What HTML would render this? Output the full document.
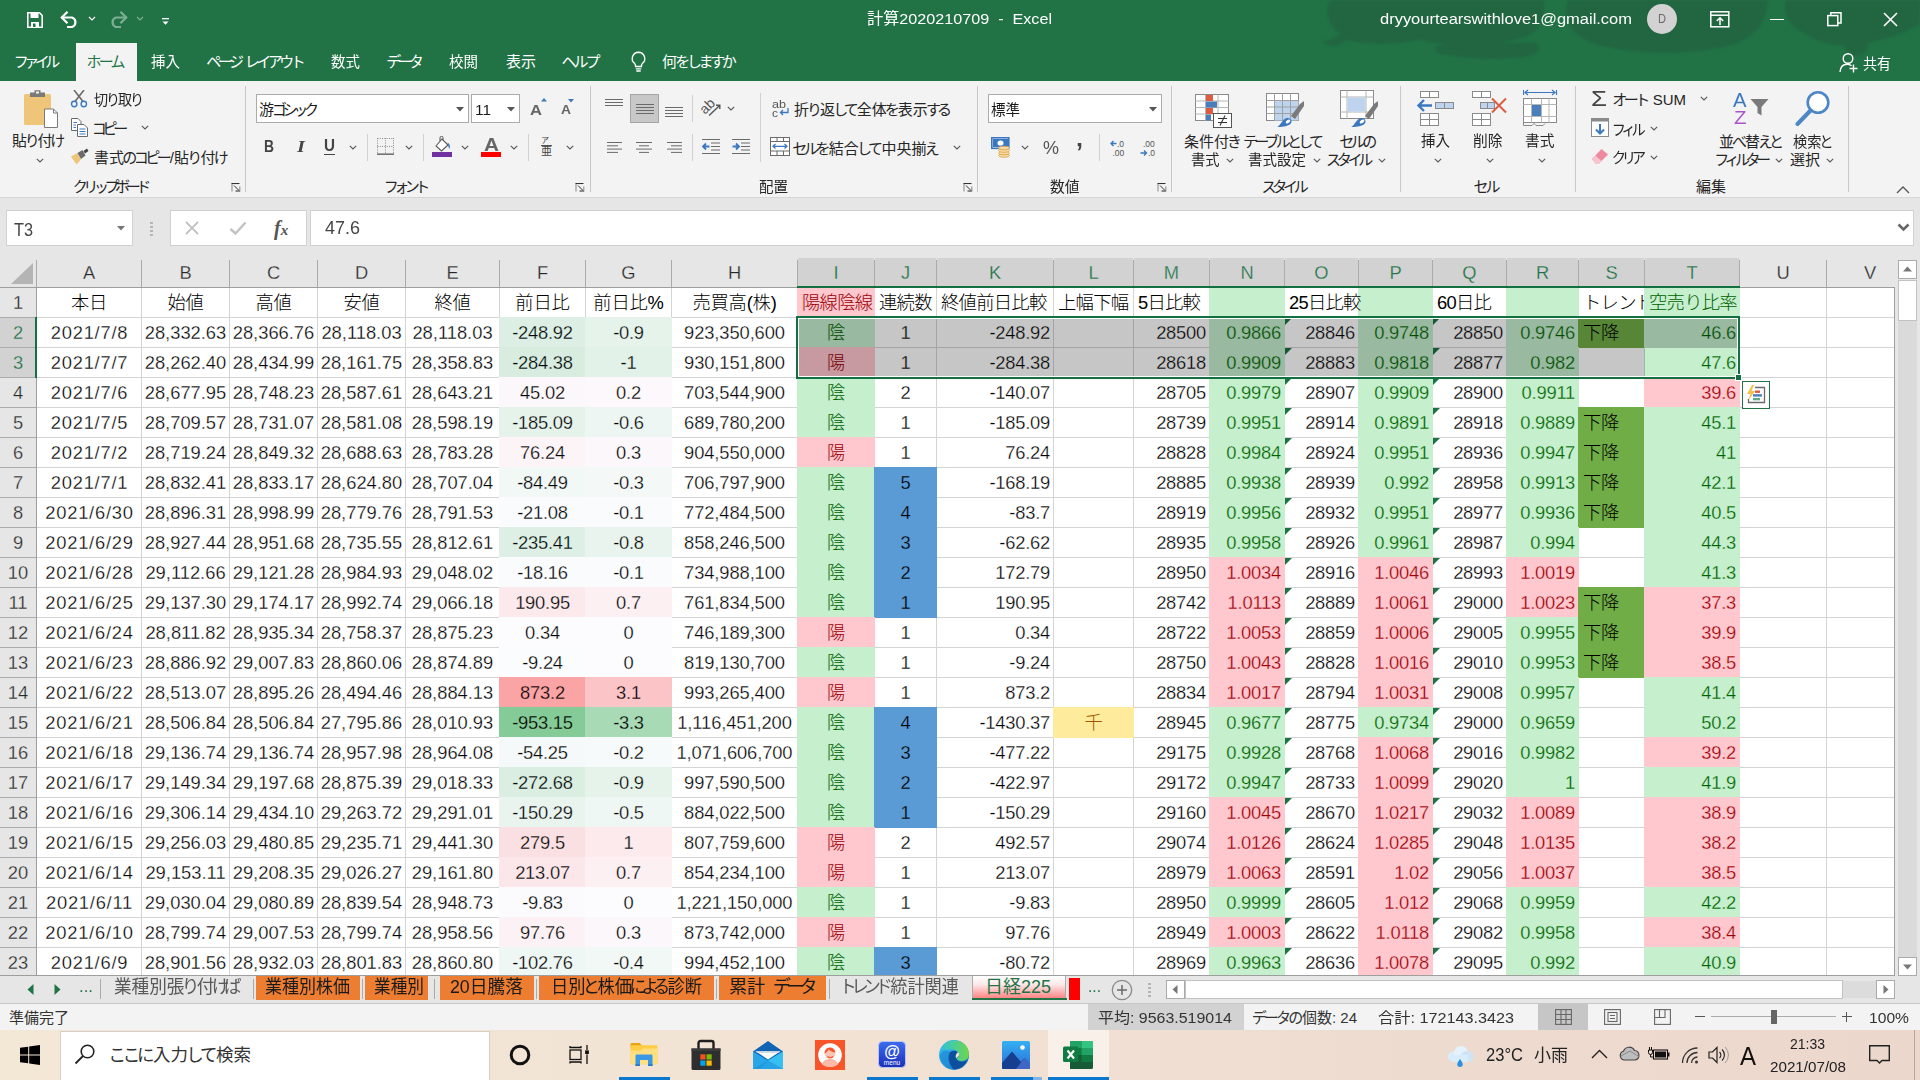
<!DOCTYPE html>
<html lang="ja"><head><meta charset="utf-8"><title>計算2020210709 - Excel</title>
<style>
*{box-sizing:border-box;margin:0;padding:0}
html,body{width:1920px;height:1080px;overflow:hidden;background:#fff}
body{position:relative;font-family:"Liberation Sans","Noto Sans CJK JP",sans-serif;color:#000}
div,span,svg{position:absolute}
.t{white-space:nowrap;transform-origin:0 50%;line-height:1}
.t span{position:static}
#grid{left:0;top:0;width:1895px;height:976px;overflow:hidden;background:#fff}
.ch{-webkit-text-stroke:.28px #e6e6e6;top:258px;height:29px;line-height:30px;text-align:center;font-size:18.33px;color:#262626;background:#e6e6e6}
.ch.sel{background:#d2d2d2;color:#217346;-webkit-text-stroke:.28px #d2d2d2}
.rh{-webkit-text-stroke:.28px #e6e6e6;left:0;width:36px;height:29px;line-height:29px;text-align:center;font-size:18.33px;color:#262626;background:#e6e6e6}
.rh.sel{background:#d2d2d2;color:#217346;-webkit-text-stroke:.28px #d2d2d2}
.c{height:29px;line-height:29px;font-size:18.33px;font-weight:300;white-space:nowrap;overflow:hidden;letter-spacing:-0.22px}
.c.c{text-align:center}
.c.r{text-align:right;padding-right:3px}
.c.l{text-align:left;padding-left:4px}
.c.lo{text-align:left;padding-left:4px;overflow:visible}
.c.d{letter-spacing:.75px;padding-left:1px}
.c.k{letter-spacing:-.75px}
.c.n{letter-spacing:0}
.c.h{letter-spacing:-.1px}
.vl{top:288px;width:1px;height:690px;background:#d4d4d4}
.hl{left:37px;width:1858px;height:1px;background:#d4d4d4}
.tri{width:0;height:0;border-top:7px solid #1e7145;border-right:7px solid transparent}
</style></head>
<body>
<div id="grid">
<div style="left:0px;top:258px;width:1895px;height:30px;background:#e6e6e6;"></div>
<div style="left:0px;top:288px;width:37px;height:688px;background:#e6e6e6;"></div>
<div class="vl" style="left:141px"></div>
<div class="vl" style="left:229px"></div>
<div class="vl" style="left:317px"></div>
<div class="vl" style="left:405px"></div>
<div class="vl" style="left:499px"></div>
<div class="vl" style="left:585px"></div>
<div class="vl" style="left:671px"></div>
<div class="vl" style="left:797px"></div>
<div class="vl" style="left:874px"></div>
<div class="vl" style="left:936px"></div>
<div class="vl" style="left:1053px"></div>
<div class="vl" style="left:1133px"></div>
<div class="vl" style="left:1209px"></div>
<div class="vl" style="left:1284px"></div>
<div class="vl" style="left:1358px"></div>
<div class="vl" style="left:1432px"></div>
<div class="vl" style="left:1506px"></div>
<div class="vl" style="left:1578px"></div>
<div class="vl" style="left:1644px"></div>
<div class="vl" style="left:1739px"></div>
<div class="vl" style="left:1826px"></div>
<div class="hl" style="top:317px"></div>
<div class="hl" style="top:347px"></div>
<div class="hl" style="top:377px"></div>
<div class="hl" style="top:407px"></div>
<div class="hl" style="top:437px"></div>
<div class="hl" style="top:467px"></div>
<div class="hl" style="top:497px"></div>
<div class="hl" style="top:527px"></div>
<div class="hl" style="top:557px"></div>
<div class="hl" style="top:587px"></div>
<div class="hl" style="top:617px"></div>
<div class="hl" style="top:647px"></div>
<div class="hl" style="top:677px"></div>
<div class="hl" style="top:707px"></div>
<div class="hl" style="top:737px"></div>
<div class="hl" style="top:767px"></div>
<div class="hl" style="top:797px"></div>
<div class="hl" style="top:827px"></div>
<div class="hl" style="top:857px"></div>
<div class="hl" style="top:887px"></div>
<div class="hl" style="top:917px"></div>
<div class="hl" style="top:947px"></div>
<div class="hl" style="top:977px"></div>
<div class="ch" style="left:37px;width:104px">A</div>
<div class="ch" style="left:142px;width:87px">B</div>
<div class="ch" style="left:230px;width:87px">C</div>
<div class="ch" style="left:318px;width:87px">D</div>
<div class="ch" style="left:406px;width:93px">E</div>
<div class="ch" style="left:500px;width:85px">F</div>
<div class="ch" style="left:586px;width:85px">G</div>
<div class="ch" style="left:672px;width:125px">H</div>
<div class="ch sel" style="left:798px;width:76px">I</div>
<div class="ch sel" style="left:875px;width:61px">J</div>
<div class="ch sel" style="left:937px;width:116px">K</div>
<div class="ch sel" style="left:1054px;width:79px">L</div>
<div class="ch sel" style="left:1134px;width:75px">M</div>
<div class="ch sel" style="left:1210px;width:74px">N</div>
<div class="ch sel" style="left:1285px;width:73px">O</div>
<div class="ch sel" style="left:1359px;width:73px">P</div>
<div class="ch sel" style="left:1433px;width:73px">Q</div>
<div class="ch sel" style="left:1507px;width:71px">R</div>
<div class="ch sel" style="left:1579px;width:65px">S</div>
<div class="ch sel" style="left:1645px;width:94px">T</div>
<div class="ch" style="left:1740px;width:86px">U</div>
<div class="ch" style="left:1827px;width:86px">V</div>
<div class="rh" style="top:288px">1</div>
<div class="rh sel" style="top:318px">2</div>
<div class="rh sel" style="top:348px">3</div>
<div class="rh" style="top:378px">4</div>
<div class="rh" style="top:408px">5</div>
<div class="rh" style="top:438px">6</div>
<div class="rh" style="top:468px">7</div>
<div class="rh" style="top:498px">8</div>
<div class="rh" style="top:528px">9</div>
<div class="rh" style="top:558px">10</div>
<div class="rh" style="top:588px">11</div>
<div class="rh" style="top:618px">12</div>
<div class="rh" style="top:648px">13</div>
<div class="rh" style="top:678px">14</div>
<div class="rh" style="top:708px">15</div>
<div class="rh" style="top:738px">16</div>
<div class="rh" style="top:768px">17</div>
<div class="rh" style="top:798px">18</div>
<div class="rh" style="top:828px">19</div>
<div class="rh" style="top:858px">20</div>
<div class="rh" style="top:888px">21</div>
<div class="rh" style="top:918px">22</div>
<div class="rh" style="top:948px">23</div>








<div class="f" style="left:797px;top:287px;width:78px;height:31px;background:#ffc7ce"></div>




<div class="f" style="left:1209px;top:287px;width:76px;height:31px;background:#c6efce"></div>

<div class="f" style="left:1358px;top:287px;width:75px;height:31px;background:#c6efce"></div>

<div class="f" style="left:1506px;top:287px;width:73px;height:31px;background:#c6efce"></div>

<div class="f" style="left:1644px;top:287px;width:96px;height:31px;background:#c6efce"></div>





<div class="f" style="left:499px;top:317px;width:87px;height:31px;background:#ddefe4"></div>
<div class="f" style="left:585px;top:317px;width:87px;height:31px;background:#e5f3eb"></div>

<div class="f" style="left:797px;top:317px;width:78px;height:31px;background:#c6efce"></div>




<div class="f" style="left:1209px;top:317px;width:76px;height:31px;background:#c6efce"></div>

<div class="tri" style="left:1285px;top:318px"></div>
<div class="f" style="left:1358px;top:317px;width:75px;height:31px;background:#c6efce"></div>

<div class="tri" style="left:1433px;top:318px"></div>
<div class="f" style="left:1506px;top:317px;width:73px;height:31px;background:#c6efce"></div>
<div class="f" style="left:1578px;top:317px;width:67px;height:31px;background:#70ad47"></div>
<div class="f" style="left:1644px;top:317px;width:96px;height:31px;background:#c6efce"></div>





<div class="f" style="left:499px;top:347px;width:87px;height:31px;background:#d8ede0"></div>
<div class="f" style="left:585px;top:347px;width:87px;height:31px;background:#e2f2e9"></div>

<div class="f" style="left:797px;top:347px;width:78px;height:31px;background:#ffc7ce"></div>




<div class="f" style="left:1209px;top:347px;width:76px;height:31px;background:#c6efce"></div>

<div class="tri" style="left:1285px;top:348px"></div>
<div class="f" style="left:1358px;top:347px;width:75px;height:31px;background:#c6efce"></div>

<div class="tri" style="left:1433px;top:348px"></div>
<div class="f" style="left:1506px;top:347px;width:73px;height:31px;background:#c6efce"></div>

<div class="f" style="left:1644px;top:347px;width:96px;height:31px;background:#c6efce"></div>





<div class="f" style="left:499px;top:377px;width:87px;height:31px;background:#fcf7fa"></div>
<div class="f" style="left:585px;top:377px;width:87px;height:31px;background:#fcf8fb"></div>

<div class="f" style="left:797px;top:377px;width:78px;height:31px;background:#c6efce"></div>




<div class="f" style="left:1209px;top:377px;width:76px;height:31px;background:#c6efce"></div>

<div class="tri" style="left:1285px;top:378px"></div>
<div class="f" style="left:1358px;top:377px;width:75px;height:31px;background:#c6efce"></div>

<div class="tri" style="left:1433px;top:378px"></div>
<div class="f" style="left:1506px;top:377px;width:73px;height:31px;background:#c6efce"></div>

<div class="f" style="left:1644px;top:377px;width:96px;height:31px;background:#ffc7ce"></div>





<div class="f" style="left:499px;top:407px;width:87px;height:31px;background:#e5f3eb"></div>
<div class="f" style="left:585px;top:407px;width:87px;height:31px;background:#edf6f2"></div>

<div class="f" style="left:797px;top:407px;width:78px;height:31px;background:#c6efce"></div>




<div class="f" style="left:1209px;top:407px;width:76px;height:31px;background:#c6efce"></div>

<div class="tri" style="left:1285px;top:408px"></div>
<div class="f" style="left:1358px;top:407px;width:75px;height:31px;background:#c6efce"></div>

<div class="tri" style="left:1433px;top:408px"></div>
<div class="f" style="left:1506px;top:407px;width:73px;height:31px;background:#c6efce"></div>
<div class="f" style="left:1578px;top:407px;width:67px;height:31px;background:#70ad47"></div>
<div class="f" style="left:1644px;top:407px;width:96px;height:31px;background:#c6efce"></div>





<div class="f" style="left:499px;top:437px;width:87px;height:31px;background:#fcf4f7"></div>
<div class="f" style="left:585px;top:437px;width:87px;height:31px;background:#fcf7fa"></div>

<div class="f" style="left:797px;top:437px;width:78px;height:31px;background:#ffc7ce"></div>




<div class="f" style="left:1209px;top:437px;width:76px;height:31px;background:#c6efce"></div>

<div class="tri" style="left:1285px;top:438px"></div>
<div class="f" style="left:1358px;top:437px;width:75px;height:31px;background:#c6efce"></div>

<div class="tri" style="left:1433px;top:438px"></div>
<div class="f" style="left:1506px;top:437px;width:73px;height:31px;background:#c6efce"></div>
<div class="f" style="left:1578px;top:437px;width:67px;height:31px;background:#70ad47"></div>
<div class="f" style="left:1644px;top:437px;width:96px;height:31px;background:#c6efce"></div>





<div class="f" style="left:499px;top:467px;width:87px;height:31px;background:#f1f8f6"></div>
<div class="f" style="left:585px;top:467px;width:87px;height:31px;background:#f4f9f8"></div>

<div class="f" style="left:797px;top:467px;width:78px;height:31px;background:#c6efce"></div>
<div class="f" style="left:874px;top:467px;width:63px;height:31px;background:#5b9bd5"></div>



<div class="f" style="left:1209px;top:467px;width:76px;height:31px;background:#c6efce"></div>

<div class="tri" style="left:1285px;top:468px"></div>
<div class="f" style="left:1358px;top:467px;width:75px;height:31px;background:#c6efce"></div>

<div class="tri" style="left:1433px;top:468px"></div>
<div class="f" style="left:1506px;top:467px;width:73px;height:31px;background:#c6efce"></div>
<div class="f" style="left:1578px;top:467px;width:67px;height:31px;background:#70ad47"></div>
<div class="f" style="left:1644px;top:467px;width:96px;height:31px;background:#c6efce"></div>





<div class="f" style="left:499px;top:497px;width:87px;height:31px;background:#f9fbfd"></div>
<div class="f" style="left:585px;top:497px;width:87px;height:31px;background:#f9fbfd"></div>

<div class="f" style="left:797px;top:497px;width:78px;height:31px;background:#c6efce"></div>
<div class="f" style="left:874px;top:497px;width:63px;height:31px;background:#5b9bd5"></div>



<div class="f" style="left:1209px;top:497px;width:76px;height:31px;background:#c6efce"></div>

<div class="tri" style="left:1285px;top:498px"></div>
<div class="f" style="left:1358px;top:497px;width:75px;height:31px;background:#c6efce"></div>

<div class="tri" style="left:1433px;top:498px"></div>
<div class="f" style="left:1506px;top:497px;width:73px;height:31px;background:#c6efce"></div>
<div class="f" style="left:1578px;top:497px;width:67px;height:31px;background:#70ad47"></div>
<div class="f" style="left:1644px;top:497px;width:96px;height:31px;background:#c6efce"></div>





<div class="f" style="left:499px;top:527px;width:87px;height:31px;background:#def0e5"></div>
<div class="f" style="left:585px;top:527px;width:87px;height:31px;background:#e8f4ed"></div>

<div class="f" style="left:797px;top:527px;width:78px;height:31px;background:#c6efce"></div>
<div class="f" style="left:874px;top:527px;width:63px;height:31px;background:#5b9bd5"></div>



<div class="f" style="left:1209px;top:527px;width:76px;height:31px;background:#c6efce"></div>

<div class="tri" style="left:1285px;top:528px"></div>
<div class="f" style="left:1358px;top:527px;width:75px;height:31px;background:#c6efce"></div>

<div class="tri" style="left:1433px;top:528px"></div>
<div class="f" style="left:1506px;top:527px;width:73px;height:31px;background:#c6efce"></div>

<div class="f" style="left:1644px;top:527px;width:96px;height:31px;background:#c6efce"></div>





<div class="f" style="left:499px;top:557px;width:87px;height:31px;background:#fafbfd"></div>
<div class="f" style="left:585px;top:557px;width:87px;height:31px;background:#f9fbfd"></div>

<div class="f" style="left:797px;top:557px;width:78px;height:31px;background:#c6efce"></div>
<div class="f" style="left:874px;top:557px;width:63px;height:31px;background:#5b9bd5"></div>



<div class="f" style="left:1209px;top:557px;width:76px;height:31px;background:#ffc7ce"></div>

<div class="tri" style="left:1285px;top:558px"></div>
<div class="f" style="left:1358px;top:557px;width:75px;height:31px;background:#ffc7ce"></div>

<div class="tri" style="left:1433px;top:558px"></div>
<div class="f" style="left:1506px;top:557px;width:73px;height:31px;background:#ffc7ce"></div>

<div class="f" style="left:1644px;top:557px;width:96px;height:31px;background:#c6efce"></div>





<div class="f" style="left:499px;top:587px;width:87px;height:31px;background:#fbe9ec"></div>
<div class="f" style="left:585px;top:587px;width:87px;height:31px;background:#fcf0f3"></div>

<div class="f" style="left:797px;top:587px;width:78px;height:31px;background:#c6efce"></div>
<div class="f" style="left:874px;top:587px;width:63px;height:31px;background:#5b9bd5"></div>



<div class="f" style="left:1209px;top:587px;width:76px;height:31px;background:#ffc7ce"></div>

<div class="tri" style="left:1285px;top:588px"></div>
<div class="f" style="left:1358px;top:587px;width:75px;height:31px;background:#ffc7ce"></div>

<div class="tri" style="left:1433px;top:588px"></div>
<div class="f" style="left:1506px;top:587px;width:73px;height:31px;background:#ffc7ce"></div>
<div class="f" style="left:1578px;top:587px;width:67px;height:31px;background:#70ad47"></div>
<div class="f" style="left:1644px;top:587px;width:96px;height:31px;background:#ffc7ce"></div>





<div class="f" style="left:499px;top:617px;width:87px;height:31px;background:#fcfcff"></div>
<div class="f" style="left:585px;top:617px;width:87px;height:31px;background:#fcfcff"></div>

<div class="f" style="left:797px;top:617px;width:78px;height:31px;background:#ffc7ce"></div>




<div class="f" style="left:1209px;top:617px;width:76px;height:31px;background:#ffc7ce"></div>

<div class="tri" style="left:1285px;top:618px"></div>
<div class="f" style="left:1358px;top:617px;width:75px;height:31px;background:#ffc7ce"></div>

<div class="tri" style="left:1433px;top:618px"></div>
<div class="f" style="left:1506px;top:617px;width:73px;height:31px;background:#c6efce"></div>
<div class="f" style="left:1578px;top:617px;width:67px;height:31px;background:#70ad47"></div>
<div class="f" style="left:1644px;top:617px;width:96px;height:31px;background:#ffc7ce"></div>





<div class="f" style="left:499px;top:647px;width:87px;height:31px;background:#fbfcfe"></div>
<div class="f" style="left:585px;top:647px;width:87px;height:31px;background:#fcfcff"></div>

<div class="f" style="left:797px;top:647px;width:78px;height:31px;background:#c6efce"></div>




<div class="f" style="left:1209px;top:647px;width:76px;height:31px;background:#ffc7ce"></div>

<div class="tri" style="left:1285px;top:648px"></div>
<div class="f" style="left:1358px;top:647px;width:75px;height:31px;background:#ffc7ce"></div>

<div class="tri" style="left:1433px;top:648px"></div>
<div class="f" style="left:1506px;top:647px;width:73px;height:31px;background:#c6efce"></div>
<div class="f" style="left:1578px;top:647px;width:67px;height:31px;background:#70ad47"></div>
<div class="f" style="left:1644px;top:647px;width:96px;height:31px;background:#ffc7ce"></div>





<div class="f" style="left:499px;top:677px;width:87px;height:31px;background:#faa4a6"></div>
<div class="f" style="left:585px;top:677px;width:87px;height:31px;background:#fbc5c8"></div>

<div class="f" style="left:797px;top:677px;width:78px;height:31px;background:#ffc7ce"></div>




<div class="f" style="left:1209px;top:677px;width:76px;height:31px;background:#ffc7ce"></div>

<div class="tri" style="left:1285px;top:678px"></div>
<div class="f" style="left:1358px;top:677px;width:75px;height:31px;background:#ffc7ce"></div>

<div class="tri" style="left:1433px;top:678px"></div>
<div class="f" style="left:1506px;top:677px;width:73px;height:31px;background:#c6efce"></div>

<div class="f" style="left:1644px;top:677px;width:96px;height:31px;background:#c6efce"></div>





<div class="f" style="left:499px;top:707px;width:87px;height:31px;background:#84cb97"></div>
<div class="f" style="left:585px;top:707px;width:87px;height:31px;background:#a8dab6"></div>

<div class="f" style="left:797px;top:707px;width:78px;height:31px;background:#c6efce"></div>
<div class="f" style="left:874px;top:707px;width:63px;height:31px;background:#5b9bd5"></div>

<div class="f" style="left:1053px;top:707px;width:81px;height:31px;background:#ffeb9c"></div>

<div class="f" style="left:1209px;top:707px;width:76px;height:31px;background:#c6efce"></div>

<div class="tri" style="left:1285px;top:708px"></div>
<div class="f" style="left:1358px;top:707px;width:75px;height:31px;background:#c6efce"></div>

<div class="tri" style="left:1433px;top:708px"></div>
<div class="f" style="left:1506px;top:707px;width:73px;height:31px;background:#c6efce"></div>

<div class="f" style="left:1644px;top:707px;width:96px;height:31px;background:#c6efce"></div>





<div class="f" style="left:499px;top:737px;width:87px;height:31px;background:#f5f9f9"></div>
<div class="f" style="left:585px;top:737px;width:87px;height:31px;background:#f7fafb"></div>

<div class="f" style="left:797px;top:737px;width:78px;height:31px;background:#c6efce"></div>
<div class="f" style="left:874px;top:737px;width:63px;height:31px;background:#5b9bd5"></div>



<div class="f" style="left:1209px;top:737px;width:76px;height:31px;background:#c6efce"></div>

<div class="tri" style="left:1285px;top:738px"></div>
<div class="f" style="left:1358px;top:737px;width:75px;height:31px;background:#ffc7ce"></div>

<div class="tri" style="left:1433px;top:738px"></div>
<div class="f" style="left:1506px;top:737px;width:73px;height:31px;background:#c6efce"></div>

<div class="f" style="left:1644px;top:737px;width:96px;height:31px;background:#ffc7ce"></div>





<div class="f" style="left:499px;top:767px;width:87px;height:31px;background:#daeee1"></div>
<div class="f" style="left:585px;top:767px;width:87px;height:31px;background:#e5f3eb"></div>

<div class="f" style="left:797px;top:767px;width:78px;height:31px;background:#c6efce"></div>
<div class="f" style="left:874px;top:767px;width:63px;height:31px;background:#5b9bd5"></div>



<div class="f" style="left:1209px;top:767px;width:76px;height:31px;background:#c6efce"></div>

<div class="tri" style="left:1285px;top:768px"></div>
<div class="f" style="left:1358px;top:767px;width:75px;height:31px;background:#ffc7ce"></div>

<div class="tri" style="left:1433px;top:768px"></div>
<div class="f" style="left:1506px;top:767px;width:73px;height:31px;background:#c6efce"></div>

<div class="f" style="left:1644px;top:767px;width:96px;height:31px;background:#c6efce"></div>





<div class="f" style="left:499px;top:797px;width:87px;height:31px;background:#e9f4ef"></div>
<div class="f" style="left:585px;top:797px;width:87px;height:31px;background:#eff7f4"></div>

<div class="f" style="left:797px;top:797px;width:78px;height:31px;background:#c6efce"></div>
<div class="f" style="left:874px;top:797px;width:63px;height:31px;background:#5b9bd5"></div>



<div class="f" style="left:1209px;top:797px;width:76px;height:31px;background:#ffc7ce"></div>

<div class="tri" style="left:1285px;top:798px"></div>
<div class="f" style="left:1358px;top:797px;width:75px;height:31px;background:#ffc7ce"></div>

<div class="tri" style="left:1433px;top:798px"></div>
<div class="f" style="left:1506px;top:797px;width:73px;height:31px;background:#ffc7ce"></div>

<div class="f" style="left:1644px;top:797px;width:96px;height:31px;background:#ffc7ce"></div>





<div class="f" style="left:499px;top:827px;width:87px;height:31px;background:#fbe0e3"></div>
<div class="f" style="left:585px;top:827px;width:87px;height:31px;background:#fceaed"></div>

<div class="f" style="left:797px;top:827px;width:78px;height:31px;background:#ffc7ce"></div>




<div class="f" style="left:1209px;top:827px;width:76px;height:31px;background:#ffc7ce"></div>

<div class="tri" style="left:1285px;top:828px"></div>
<div class="f" style="left:1358px;top:827px;width:75px;height:31px;background:#ffc7ce"></div>

<div class="tri" style="left:1433px;top:828px"></div>
<div class="f" style="left:1506px;top:827px;width:73px;height:31px;background:#ffc7ce"></div>

<div class="f" style="left:1644px;top:827px;width:96px;height:31px;background:#ffc7ce"></div>





<div class="f" style="left:499px;top:857px;width:87px;height:31px;background:#fbe6e9"></div>
<div class="f" style="left:585px;top:857px;width:87px;height:31px;background:#fcf0f3"></div>

<div class="f" style="left:797px;top:857px;width:78px;height:31px;background:#ffc7ce"></div>




<div class="f" style="left:1209px;top:857px;width:76px;height:31px;background:#ffc7ce"></div>

<div class="tri" style="left:1285px;top:858px"></div>
<div class="f" style="left:1358px;top:857px;width:75px;height:31px;background:#ffc7ce"></div>

<div class="tri" style="left:1433px;top:858px"></div>
<div class="f" style="left:1506px;top:857px;width:73px;height:31px;background:#ffc7ce"></div>

<div class="f" style="left:1644px;top:857px;width:96px;height:31px;background:#ffc7ce"></div>





<div class="f" style="left:499px;top:887px;width:87px;height:31px;background:#fbfbfe"></div>
<div class="f" style="left:585px;top:887px;width:87px;height:31px;background:#fcfcff"></div>

<div class="f" style="left:797px;top:887px;width:78px;height:31px;background:#c6efce"></div>




<div class="f" style="left:1209px;top:887px;width:76px;height:31px;background:#c6efce"></div>

<div class="tri" style="left:1285px;top:888px"></div>
<div class="f" style="left:1358px;top:887px;width:75px;height:31px;background:#ffc7ce"></div>

<div class="tri" style="left:1433px;top:888px"></div>
<div class="f" style="left:1506px;top:887px;width:73px;height:31px;background:#c6efce"></div>

<div class="f" style="left:1644px;top:887px;width:96px;height:31px;background:#c6efce"></div>





<div class="f" style="left:499px;top:917px;width:87px;height:31px;background:#fcf2f5"></div>
<div class="f" style="left:585px;top:917px;width:87px;height:31px;background:#fcf7fa"></div>

<div class="f" style="left:797px;top:917px;width:78px;height:31px;background:#ffc7ce"></div>




<div class="f" style="left:1209px;top:917px;width:76px;height:31px;background:#ffc7ce"></div>

<div class="tri" style="left:1285px;top:918px"></div>
<div class="f" style="left:1358px;top:917px;width:75px;height:31px;background:#ffc7ce"></div>

<div class="tri" style="left:1433px;top:918px"></div>
<div class="f" style="left:1506px;top:917px;width:73px;height:31px;background:#c6efce"></div>

<div class="f" style="left:1644px;top:917px;width:96px;height:31px;background:#ffc7ce"></div>





<div class="f" style="left:499px;top:947px;width:87px;height:31px;background:#eff7f4"></div>
<div class="f" style="left:585px;top:947px;width:87px;height:31px;background:#f2f8f6"></div>

<div class="f" style="left:797px;top:947px;width:78px;height:31px;background:#c6efce"></div>
<div class="f" style="left:874px;top:947px;width:63px;height:31px;background:#5b9bd5"></div>



<div class="f" style="left:1209px;top:947px;width:76px;height:31px;background:#c6efce"></div>

<div class="tri" style="left:1285px;top:948px"></div>
<div class="f" style="left:1358px;top:947px;width:75px;height:31px;background:#ffc7ce"></div>

<div class="tri" style="left:1433px;top:948px"></div>
<div class="f" style="left:1506px;top:947px;width:73px;height:31px;background:#c6efce"></div>

<div class="f" style="left:1644px;top:947px;width:96px;height:31px;background:#c6efce"></div>
<div class="c c" style="left:37px;top:288px;width:104px;">本日</div>
<div class="c c" style="left:142px;top:288px;width:87px;">始値</div>
<div class="c c" style="left:230px;top:288px;width:87px;">高値</div>
<div class="c c" style="left:318px;top:288px;width:87px;">安値</div>
<div class="c c" style="left:406px;top:288px;width:93px;">終値</div>
<div class="c c" style="left:500px;top:288px;width:85px;">前日比</div>
<div class="c c" style="left:586px;top:288px;width:85px;">前日比%</div>
<div class="c c" style="left:672px;top:288px;width:125px;">売買高(株)</div>
<div class="c l k" style="left:798px;top:288px;width:76px;color:#9c0006;">陽線陰線</div>
<div class="c l k" style="left:875px;top:288px;width:61px;">連続数</div>
<div class="c l k" style="left:937px;top:288px;width:116px;">終値前日比較</div>
<div class="c l k" style="left:1054px;top:288px;width:79px;">上幅下幅</div>
<div class="c l k" style="left:1134px;top:288px;width:75px;">5日比較</div>
<div class="c lo k" style="left:1285px;top:288px;width:73px;">25日比較</div>
<div class="c l k" style="left:1433px;top:288px;width:73px;">60日比</div>
<div class="c l k" style="left:1579px;top:288px;width:65px;">トレンド</div>
<div class="c l k" style="left:1645px;top:288px;width:94px;color:#006100;">空売り比率</div>
<div class="c c d" style="left:37px;top:318px;width:104px;-webkit-text-stroke:.28px #fff;">2021/7/8</div>
<div class="c c n" style="left:142px;top:318px;width:87px;-webkit-text-stroke:.28px #fff;">28,332.63</div>
<div class="c c n" style="left:230px;top:318px;width:87px;-webkit-text-stroke:.28px #fff;">28,366.76</div>
<div class="c c n" style="left:318px;top:318px;width:87px;-webkit-text-stroke:.28px #fff;">28,118.03</div>
<div class="c c n" style="left:406px;top:318px;width:93px;-webkit-text-stroke:.28px #fff;">28,118.03</div>
<div class="c c" style="left:500px;top:318px;width:85px;-webkit-text-stroke:.28px #ddefe4;">-248.92</div>
<div class="c c" style="left:586px;top:318px;width:85px;-webkit-text-stroke:.28px #e5f3eb;">-0.9</div>
<div class="c c h" style="left:672px;top:318px;width:125px;-webkit-text-stroke:.28px #fff;">923,350,600</div>
<div class="c c" style="left:798px;top:318px;width:76px;color:#006100;">陰</div>
<div class="c c" style="left:875px;top:318px;width:61px;-webkit-text-stroke:.28px #fff;">1</div>
<div class="c r" style="left:937px;top:318px;width:116px;-webkit-text-stroke:.28px #fff;">-248.92</div>
<div class="c r" style="left:1134px;top:318px;width:75px;-webkit-text-stroke:.28px #fff;">28500</div>
<div class="c r" style="left:1210px;top:318px;width:74px;color:#006100;-webkit-text-stroke:.28px #c6efce;">0.9866</div>
<div class="c r" style="left:1285px;top:318px;width:73px;-webkit-text-stroke:.28px #fff;">28846</div>
<div class="c r" style="left:1359px;top:318px;width:73px;color:#006100;-webkit-text-stroke:.28px #c6efce;">0.9748</div>
<div class="c r" style="left:1433px;top:318px;width:73px;-webkit-text-stroke:.28px #fff;">28850</div>
<div class="c r" style="left:1507px;top:318px;width:71px;color:#006100;-webkit-text-stroke:.28px #c6efce;">0.9746</div>
<div class="c l" style="left:1579px;top:318px;width:65px;">下降</div>
<div class="c r" style="left:1645px;top:318px;width:94px;color:#006100;-webkit-text-stroke:.28px #c6efce;">46.6</div>
<div class="c c d" style="left:37px;top:348px;width:104px;-webkit-text-stroke:.28px #fff;">2021/7/7</div>
<div class="c c n" style="left:142px;top:348px;width:87px;-webkit-text-stroke:.28px #fff;">28,262.40</div>
<div class="c c n" style="left:230px;top:348px;width:87px;-webkit-text-stroke:.28px #fff;">28,434.99</div>
<div class="c c n" style="left:318px;top:348px;width:87px;-webkit-text-stroke:.28px #fff;">28,161.75</div>
<div class="c c n" style="left:406px;top:348px;width:93px;-webkit-text-stroke:.28px #fff;">28,358.83</div>
<div class="c c" style="left:500px;top:348px;width:85px;-webkit-text-stroke:.28px #d8ede0;">-284.38</div>
<div class="c c" style="left:586px;top:348px;width:85px;-webkit-text-stroke:.28px #e2f2e9;">-1</div>
<div class="c c h" style="left:672px;top:348px;width:125px;-webkit-text-stroke:.28px #fff;">930,151,800</div>
<div class="c c" style="left:798px;top:348px;width:76px;color:#9c0006;">陽</div>
<div class="c c" style="left:875px;top:348px;width:61px;-webkit-text-stroke:.28px #fff;">1</div>
<div class="c r" style="left:937px;top:348px;width:116px;-webkit-text-stroke:.28px #fff;">-284.38</div>
<div class="c r" style="left:1134px;top:348px;width:75px;-webkit-text-stroke:.28px #fff;">28618</div>
<div class="c r" style="left:1210px;top:348px;width:74px;color:#006100;-webkit-text-stroke:.28px #c6efce;">0.9909</div>
<div class="c r" style="left:1285px;top:348px;width:73px;-webkit-text-stroke:.28px #fff;">28883</div>
<div class="c r" style="left:1359px;top:348px;width:73px;color:#006100;-webkit-text-stroke:.28px #c6efce;">0.9818</div>
<div class="c r" style="left:1433px;top:348px;width:73px;-webkit-text-stroke:.28px #fff;">28877</div>
<div class="c r" style="left:1507px;top:348px;width:71px;color:#006100;-webkit-text-stroke:.28px #c6efce;">0.982</div>
<div class="c r" style="left:1645px;top:348px;width:94px;color:#006100;-webkit-text-stroke:.28px #c6efce;">47.6</div>
<div class="c c d" style="left:37px;top:378px;width:104px;-webkit-text-stroke:.28px #fff;">2021/7/6</div>
<div class="c c n" style="left:142px;top:378px;width:87px;-webkit-text-stroke:.28px #fff;">28,677.95</div>
<div class="c c n" style="left:230px;top:378px;width:87px;-webkit-text-stroke:.28px #fff;">28,748.23</div>
<div class="c c n" style="left:318px;top:378px;width:87px;-webkit-text-stroke:.28px #fff;">28,587.61</div>
<div class="c c n" style="left:406px;top:378px;width:93px;-webkit-text-stroke:.28px #fff;">28,643.21</div>
<div class="c c" style="left:500px;top:378px;width:85px;-webkit-text-stroke:.28px #fcf7fa;">45.02</div>
<div class="c c" style="left:586px;top:378px;width:85px;-webkit-text-stroke:.28px #fcf8fb;">0.2</div>
<div class="c c h" style="left:672px;top:378px;width:125px;-webkit-text-stroke:.28px #fff;">703,544,900</div>
<div class="c c" style="left:798px;top:378px;width:76px;color:#006100;">陰</div>
<div class="c c" style="left:875px;top:378px;width:61px;-webkit-text-stroke:.28px #fff;">2</div>
<div class="c r" style="left:937px;top:378px;width:116px;-webkit-text-stroke:.28px #fff;">-140.07</div>
<div class="c r" style="left:1134px;top:378px;width:75px;-webkit-text-stroke:.28px #fff;">28705</div>
<div class="c r" style="left:1210px;top:378px;width:74px;color:#006100;-webkit-text-stroke:.28px #c6efce;">0.9979</div>
<div class="c r" style="left:1285px;top:378px;width:73px;-webkit-text-stroke:.28px #fff;">28907</div>
<div class="c r" style="left:1359px;top:378px;width:73px;color:#006100;-webkit-text-stroke:.28px #c6efce;">0.9909</div>
<div class="c r" style="left:1433px;top:378px;width:73px;-webkit-text-stroke:.28px #fff;">28900</div>
<div class="c r" style="left:1507px;top:378px;width:71px;color:#006100;-webkit-text-stroke:.28px #c6efce;">0.9911</div>
<div class="c r" style="left:1645px;top:378px;width:94px;color:#9c0006;-webkit-text-stroke:.28px #ffc7ce;">39.6</div>
<div class="c c d" style="left:37px;top:408px;width:104px;-webkit-text-stroke:.28px #fff;">2021/7/5</div>
<div class="c c n" style="left:142px;top:408px;width:87px;-webkit-text-stroke:.28px #fff;">28,709.57</div>
<div class="c c n" style="left:230px;top:408px;width:87px;-webkit-text-stroke:.28px #fff;">28,731.07</div>
<div class="c c n" style="left:318px;top:408px;width:87px;-webkit-text-stroke:.28px #fff;">28,581.08</div>
<div class="c c n" style="left:406px;top:408px;width:93px;-webkit-text-stroke:.28px #fff;">28,598.19</div>
<div class="c c" style="left:500px;top:408px;width:85px;-webkit-text-stroke:.28px #e5f3eb;">-185.09</div>
<div class="c c" style="left:586px;top:408px;width:85px;-webkit-text-stroke:.28px #edf6f2;">-0.6</div>
<div class="c c h" style="left:672px;top:408px;width:125px;-webkit-text-stroke:.28px #fff;">689,780,200</div>
<div class="c c" style="left:798px;top:408px;width:76px;color:#006100;">陰</div>
<div class="c c" style="left:875px;top:408px;width:61px;-webkit-text-stroke:.28px #fff;">1</div>
<div class="c r" style="left:937px;top:408px;width:116px;-webkit-text-stroke:.28px #fff;">-185.09</div>
<div class="c r" style="left:1134px;top:408px;width:75px;-webkit-text-stroke:.28px #fff;">28739</div>
<div class="c r" style="left:1210px;top:408px;width:74px;color:#006100;-webkit-text-stroke:.28px #c6efce;">0.9951</div>
<div class="c r" style="left:1285px;top:408px;width:73px;-webkit-text-stroke:.28px #fff;">28914</div>
<div class="c r" style="left:1359px;top:408px;width:73px;color:#006100;-webkit-text-stroke:.28px #c6efce;">0.9891</div>
<div class="c r" style="left:1433px;top:408px;width:73px;-webkit-text-stroke:.28px #fff;">28918</div>
<div class="c r" style="left:1507px;top:408px;width:71px;color:#006100;-webkit-text-stroke:.28px #c6efce;">0.9889</div>
<div class="c l" style="left:1579px;top:408px;width:65px;">下降</div>
<div class="c r" style="left:1645px;top:408px;width:94px;color:#006100;-webkit-text-stroke:.28px #c6efce;">45.1</div>
<div class="c c d" style="left:37px;top:438px;width:104px;-webkit-text-stroke:.28px #fff;">2021/7/2</div>
<div class="c c n" style="left:142px;top:438px;width:87px;-webkit-text-stroke:.28px #fff;">28,719.24</div>
<div class="c c n" style="left:230px;top:438px;width:87px;-webkit-text-stroke:.28px #fff;">28,849.32</div>
<div class="c c n" style="left:318px;top:438px;width:87px;-webkit-text-stroke:.28px #fff;">28,688.63</div>
<div class="c c n" style="left:406px;top:438px;width:93px;-webkit-text-stroke:.28px #fff;">28,783.28</div>
<div class="c c" style="left:500px;top:438px;width:85px;-webkit-text-stroke:.28px #fcf4f7;">76.24</div>
<div class="c c" style="left:586px;top:438px;width:85px;-webkit-text-stroke:.28px #fcf7fa;">0.3</div>
<div class="c c h" style="left:672px;top:438px;width:125px;-webkit-text-stroke:.28px #fff;">904,550,000</div>
<div class="c c" style="left:798px;top:438px;width:76px;color:#9c0006;">陽</div>
<div class="c c" style="left:875px;top:438px;width:61px;-webkit-text-stroke:.28px #fff;">1</div>
<div class="c r" style="left:937px;top:438px;width:116px;-webkit-text-stroke:.28px #fff;">76.24</div>
<div class="c r" style="left:1134px;top:438px;width:75px;-webkit-text-stroke:.28px #fff;">28828</div>
<div class="c r" style="left:1210px;top:438px;width:74px;color:#006100;-webkit-text-stroke:.28px #c6efce;">0.9984</div>
<div class="c r" style="left:1285px;top:438px;width:73px;-webkit-text-stroke:.28px #fff;">28924</div>
<div class="c r" style="left:1359px;top:438px;width:73px;color:#006100;-webkit-text-stroke:.28px #c6efce;">0.9951</div>
<div class="c r" style="left:1433px;top:438px;width:73px;-webkit-text-stroke:.28px #fff;">28936</div>
<div class="c r" style="left:1507px;top:438px;width:71px;color:#006100;-webkit-text-stroke:.28px #c6efce;">0.9947</div>
<div class="c l" style="left:1579px;top:438px;width:65px;">下降</div>
<div class="c r" style="left:1645px;top:438px;width:94px;color:#006100;-webkit-text-stroke:.28px #c6efce;">41</div>
<div class="c c d" style="left:37px;top:468px;width:104px;-webkit-text-stroke:.28px #fff;">2021/7/1</div>
<div class="c c n" style="left:142px;top:468px;width:87px;-webkit-text-stroke:.28px #fff;">28,832.41</div>
<div class="c c n" style="left:230px;top:468px;width:87px;-webkit-text-stroke:.28px #fff;">28,833.17</div>
<div class="c c n" style="left:318px;top:468px;width:87px;-webkit-text-stroke:.28px #fff;">28,624.80</div>
<div class="c c n" style="left:406px;top:468px;width:93px;-webkit-text-stroke:.28px #fff;">28,707.04</div>
<div class="c c" style="left:500px;top:468px;width:85px;-webkit-text-stroke:.28px #f1f8f6;">-84.49</div>
<div class="c c" style="left:586px;top:468px;width:85px;-webkit-text-stroke:.28px #f4f9f8;">-0.3</div>
<div class="c c h" style="left:672px;top:468px;width:125px;-webkit-text-stroke:.28px #fff;">706,797,900</div>
<div class="c c" style="left:798px;top:468px;width:76px;color:#006100;">陰</div>
<div class="c c" style="left:875px;top:468px;width:61px;-webkit-text-stroke:.28px #5b9bd5;">5</div>
<div class="c r" style="left:937px;top:468px;width:116px;-webkit-text-stroke:.28px #fff;">-168.19</div>
<div class="c r" style="left:1134px;top:468px;width:75px;-webkit-text-stroke:.28px #fff;">28885</div>
<div class="c r" style="left:1210px;top:468px;width:74px;color:#006100;-webkit-text-stroke:.28px #c6efce;">0.9938</div>
<div class="c r" style="left:1285px;top:468px;width:73px;-webkit-text-stroke:.28px #fff;">28939</div>
<div class="c r" style="left:1359px;top:468px;width:73px;color:#006100;-webkit-text-stroke:.28px #c6efce;">0.992</div>
<div class="c r" style="left:1433px;top:468px;width:73px;-webkit-text-stroke:.28px #fff;">28958</div>
<div class="c r" style="left:1507px;top:468px;width:71px;color:#006100;-webkit-text-stroke:.28px #c6efce;">0.9913</div>
<div class="c l" style="left:1579px;top:468px;width:65px;">下降</div>
<div class="c r" style="left:1645px;top:468px;width:94px;color:#006100;-webkit-text-stroke:.28px #c6efce;">42.1</div>
<div class="c c d" style="left:37px;top:498px;width:104px;-webkit-text-stroke:.28px #fff;">2021/6/30</div>
<div class="c c n" style="left:142px;top:498px;width:87px;-webkit-text-stroke:.28px #fff;">28,896.31</div>
<div class="c c n" style="left:230px;top:498px;width:87px;-webkit-text-stroke:.28px #fff;">28,998.99</div>
<div class="c c n" style="left:318px;top:498px;width:87px;-webkit-text-stroke:.28px #fff;">28,779.76</div>
<div class="c c n" style="left:406px;top:498px;width:93px;-webkit-text-stroke:.28px #fff;">28,791.53</div>
<div class="c c" style="left:500px;top:498px;width:85px;-webkit-text-stroke:.28px #f9fbfd;">-21.08</div>
<div class="c c" style="left:586px;top:498px;width:85px;-webkit-text-stroke:.28px #f9fbfd;">-0.1</div>
<div class="c c h" style="left:672px;top:498px;width:125px;-webkit-text-stroke:.28px #fff;">772,484,500</div>
<div class="c c" style="left:798px;top:498px;width:76px;color:#006100;">陰</div>
<div class="c c" style="left:875px;top:498px;width:61px;-webkit-text-stroke:.28px #5b9bd5;">4</div>
<div class="c r" style="left:937px;top:498px;width:116px;-webkit-text-stroke:.28px #fff;">-83.7</div>
<div class="c r" style="left:1134px;top:498px;width:75px;-webkit-text-stroke:.28px #fff;">28919</div>
<div class="c r" style="left:1210px;top:498px;width:74px;color:#006100;-webkit-text-stroke:.28px #c6efce;">0.9956</div>
<div class="c r" style="left:1285px;top:498px;width:73px;-webkit-text-stroke:.28px #fff;">28932</div>
<div class="c r" style="left:1359px;top:498px;width:73px;color:#006100;-webkit-text-stroke:.28px #c6efce;">0.9951</div>
<div class="c r" style="left:1433px;top:498px;width:73px;-webkit-text-stroke:.28px #fff;">28977</div>
<div class="c r" style="left:1507px;top:498px;width:71px;color:#006100;-webkit-text-stroke:.28px #c6efce;">0.9936</div>
<div class="c l" style="left:1579px;top:498px;width:65px;">下降</div>
<div class="c r" style="left:1645px;top:498px;width:94px;color:#006100;-webkit-text-stroke:.28px #c6efce;">40.5</div>
<div class="c c d" style="left:37px;top:528px;width:104px;-webkit-text-stroke:.28px #fff;">2021/6/29</div>
<div class="c c n" style="left:142px;top:528px;width:87px;-webkit-text-stroke:.28px #fff;">28,927.44</div>
<div class="c c n" style="left:230px;top:528px;width:87px;-webkit-text-stroke:.28px #fff;">28,951.68</div>
<div class="c c n" style="left:318px;top:528px;width:87px;-webkit-text-stroke:.28px #fff;">28,735.55</div>
<div class="c c n" style="left:406px;top:528px;width:93px;-webkit-text-stroke:.28px #fff;">28,812.61</div>
<div class="c c" style="left:500px;top:528px;width:85px;-webkit-text-stroke:.28px #def0e5;">-235.41</div>
<div class="c c" style="left:586px;top:528px;width:85px;-webkit-text-stroke:.28px #e8f4ed;">-0.8</div>
<div class="c c h" style="left:672px;top:528px;width:125px;-webkit-text-stroke:.28px #fff;">858,246,500</div>
<div class="c c" style="left:798px;top:528px;width:76px;color:#006100;">陰</div>
<div class="c c" style="left:875px;top:528px;width:61px;-webkit-text-stroke:.28px #5b9bd5;">3</div>
<div class="c r" style="left:937px;top:528px;width:116px;-webkit-text-stroke:.28px #fff;">-62.62</div>
<div class="c r" style="left:1134px;top:528px;width:75px;-webkit-text-stroke:.28px #fff;">28935</div>
<div class="c r" style="left:1210px;top:528px;width:74px;color:#006100;-webkit-text-stroke:.28px #c6efce;">0.9958</div>
<div class="c r" style="left:1285px;top:528px;width:73px;-webkit-text-stroke:.28px #fff;">28926</div>
<div class="c r" style="left:1359px;top:528px;width:73px;color:#006100;-webkit-text-stroke:.28px #c6efce;">0.9961</div>
<div class="c r" style="left:1433px;top:528px;width:73px;-webkit-text-stroke:.28px #fff;">28987</div>
<div class="c r" style="left:1507px;top:528px;width:71px;color:#006100;-webkit-text-stroke:.28px #c6efce;">0.994</div>
<div class="c r" style="left:1645px;top:528px;width:94px;color:#006100;-webkit-text-stroke:.28px #c6efce;">44.3</div>
<div class="c c d" style="left:37px;top:558px;width:104px;-webkit-text-stroke:.28px #fff;">2021/6/28</div>
<div class="c c n" style="left:142px;top:558px;width:87px;-webkit-text-stroke:.28px #fff;">29,112.66</div>
<div class="c c n" style="left:230px;top:558px;width:87px;-webkit-text-stroke:.28px #fff;">29,121.28</div>
<div class="c c n" style="left:318px;top:558px;width:87px;-webkit-text-stroke:.28px #fff;">28,984.93</div>
<div class="c c n" style="left:406px;top:558px;width:93px;-webkit-text-stroke:.28px #fff;">29,048.02</div>
<div class="c c" style="left:500px;top:558px;width:85px;-webkit-text-stroke:.28px #fafbfd;">-18.16</div>
<div class="c c" style="left:586px;top:558px;width:85px;-webkit-text-stroke:.28px #f9fbfd;">-0.1</div>
<div class="c c h" style="left:672px;top:558px;width:125px;-webkit-text-stroke:.28px #fff;">734,988,100</div>
<div class="c c" style="left:798px;top:558px;width:76px;color:#006100;">陰</div>
<div class="c c" style="left:875px;top:558px;width:61px;-webkit-text-stroke:.28px #5b9bd5;">2</div>
<div class="c r" style="left:937px;top:558px;width:116px;-webkit-text-stroke:.28px #fff;">172.79</div>
<div class="c r" style="left:1134px;top:558px;width:75px;-webkit-text-stroke:.28px #fff;">28950</div>
<div class="c r" style="left:1210px;top:558px;width:74px;color:#9c0006;-webkit-text-stroke:.28px #ffc7ce;">1.0034</div>
<div class="c r" style="left:1285px;top:558px;width:73px;-webkit-text-stroke:.28px #fff;">28916</div>
<div class="c r" style="left:1359px;top:558px;width:73px;color:#9c0006;-webkit-text-stroke:.28px #ffc7ce;">1.0046</div>
<div class="c r" style="left:1433px;top:558px;width:73px;-webkit-text-stroke:.28px #fff;">28993</div>
<div class="c r" style="left:1507px;top:558px;width:71px;color:#9c0006;-webkit-text-stroke:.28px #ffc7ce;">1.0019</div>
<div class="c r" style="left:1645px;top:558px;width:94px;color:#006100;-webkit-text-stroke:.28px #c6efce;">41.3</div>
<div class="c c d" style="left:37px;top:588px;width:104px;-webkit-text-stroke:.28px #fff;">2021/6/25</div>
<div class="c c n" style="left:142px;top:588px;width:87px;-webkit-text-stroke:.28px #fff;">29,137.30</div>
<div class="c c n" style="left:230px;top:588px;width:87px;-webkit-text-stroke:.28px #fff;">29,174.17</div>
<div class="c c n" style="left:318px;top:588px;width:87px;-webkit-text-stroke:.28px #fff;">28,992.74</div>
<div class="c c n" style="left:406px;top:588px;width:93px;-webkit-text-stroke:.28px #fff;">29,066.18</div>
<div class="c c" style="left:500px;top:588px;width:85px;-webkit-text-stroke:.28px #fbe9ec;">190.95</div>
<div class="c c" style="left:586px;top:588px;width:85px;-webkit-text-stroke:.28px #fcf0f3;">0.7</div>
<div class="c c h" style="left:672px;top:588px;width:125px;-webkit-text-stroke:.28px #fff;">761,834,500</div>
<div class="c c" style="left:798px;top:588px;width:76px;color:#006100;">陰</div>
<div class="c c" style="left:875px;top:588px;width:61px;-webkit-text-stroke:.28px #5b9bd5;">1</div>
<div class="c r" style="left:937px;top:588px;width:116px;-webkit-text-stroke:.28px #fff;">190.95</div>
<div class="c r" style="left:1134px;top:588px;width:75px;-webkit-text-stroke:.28px #fff;">28742</div>
<div class="c r" style="left:1210px;top:588px;width:74px;color:#9c0006;-webkit-text-stroke:.28px #ffc7ce;">1.0113</div>
<div class="c r" style="left:1285px;top:588px;width:73px;-webkit-text-stroke:.28px #fff;">28889</div>
<div class="c r" style="left:1359px;top:588px;width:73px;color:#9c0006;-webkit-text-stroke:.28px #ffc7ce;">1.0061</div>
<div class="c r" style="left:1433px;top:588px;width:73px;-webkit-text-stroke:.28px #fff;">29000</div>
<div class="c r" style="left:1507px;top:588px;width:71px;color:#9c0006;-webkit-text-stroke:.28px #ffc7ce;">1.0023</div>
<div class="c l" style="left:1579px;top:588px;width:65px;">下降</div>
<div class="c r" style="left:1645px;top:588px;width:94px;color:#9c0006;-webkit-text-stroke:.28px #ffc7ce;">37.3</div>
<div class="c c d" style="left:37px;top:618px;width:104px;-webkit-text-stroke:.28px #fff;">2021/6/24</div>
<div class="c c n" style="left:142px;top:618px;width:87px;-webkit-text-stroke:.28px #fff;">28,811.82</div>
<div class="c c n" style="left:230px;top:618px;width:87px;-webkit-text-stroke:.28px #fff;">28,935.34</div>
<div class="c c n" style="left:318px;top:618px;width:87px;-webkit-text-stroke:.28px #fff;">28,758.37</div>
<div class="c c n" style="left:406px;top:618px;width:93px;-webkit-text-stroke:.28px #fff;">28,875.23</div>
<div class="c c" style="left:500px;top:618px;width:85px;-webkit-text-stroke:.28px #fcfcff;">0.34</div>
<div class="c c" style="left:586px;top:618px;width:85px;-webkit-text-stroke:.28px #fcfcff;">0</div>
<div class="c c h" style="left:672px;top:618px;width:125px;-webkit-text-stroke:.28px #fff;">746,189,300</div>
<div class="c c" style="left:798px;top:618px;width:76px;color:#9c0006;">陽</div>
<div class="c c" style="left:875px;top:618px;width:61px;-webkit-text-stroke:.28px #fff;">1</div>
<div class="c r" style="left:937px;top:618px;width:116px;-webkit-text-stroke:.28px #fff;">0.34</div>
<div class="c r" style="left:1134px;top:618px;width:75px;-webkit-text-stroke:.28px #fff;">28722</div>
<div class="c r" style="left:1210px;top:618px;width:74px;color:#9c0006;-webkit-text-stroke:.28px #ffc7ce;">1.0053</div>
<div class="c r" style="left:1285px;top:618px;width:73px;-webkit-text-stroke:.28px #fff;">28859</div>
<div class="c r" style="left:1359px;top:618px;width:73px;color:#9c0006;-webkit-text-stroke:.28px #ffc7ce;">1.0006</div>
<div class="c r" style="left:1433px;top:618px;width:73px;-webkit-text-stroke:.28px #fff;">29005</div>
<div class="c r" style="left:1507px;top:618px;width:71px;color:#006100;-webkit-text-stroke:.28px #c6efce;">0.9955</div>
<div class="c l" style="left:1579px;top:618px;width:65px;">下降</div>
<div class="c r" style="left:1645px;top:618px;width:94px;color:#9c0006;-webkit-text-stroke:.28px #ffc7ce;">39.9</div>
<div class="c c d" style="left:37px;top:648px;width:104px;-webkit-text-stroke:.28px #fff;">2021/6/23</div>
<div class="c c n" style="left:142px;top:648px;width:87px;-webkit-text-stroke:.28px #fff;">28,886.92</div>
<div class="c c n" style="left:230px;top:648px;width:87px;-webkit-text-stroke:.28px #fff;">29,007.83</div>
<div class="c c n" style="left:318px;top:648px;width:87px;-webkit-text-stroke:.28px #fff;">28,860.06</div>
<div class="c c n" style="left:406px;top:648px;width:93px;-webkit-text-stroke:.28px #fff;">28,874.89</div>
<div class="c c" style="left:500px;top:648px;width:85px;-webkit-text-stroke:.28px #fbfcfe;">-9.24</div>
<div class="c c" style="left:586px;top:648px;width:85px;-webkit-text-stroke:.28px #fcfcff;">0</div>
<div class="c c h" style="left:672px;top:648px;width:125px;-webkit-text-stroke:.28px #fff;">819,130,700</div>
<div class="c c" style="left:798px;top:648px;width:76px;color:#006100;">陰</div>
<div class="c c" style="left:875px;top:648px;width:61px;-webkit-text-stroke:.28px #fff;">1</div>
<div class="c r" style="left:937px;top:648px;width:116px;-webkit-text-stroke:.28px #fff;">-9.24</div>
<div class="c r" style="left:1134px;top:648px;width:75px;-webkit-text-stroke:.28px #fff;">28750</div>
<div class="c r" style="left:1210px;top:648px;width:74px;color:#9c0006;-webkit-text-stroke:.28px #ffc7ce;">1.0043</div>
<div class="c r" style="left:1285px;top:648px;width:73px;-webkit-text-stroke:.28px #fff;">28828</div>
<div class="c r" style="left:1359px;top:648px;width:73px;color:#9c0006;-webkit-text-stroke:.28px #ffc7ce;">1.0016</div>
<div class="c r" style="left:1433px;top:648px;width:73px;-webkit-text-stroke:.28px #fff;">29010</div>
<div class="c r" style="left:1507px;top:648px;width:71px;color:#006100;-webkit-text-stroke:.28px #c6efce;">0.9953</div>
<div class="c l" style="left:1579px;top:648px;width:65px;">下降</div>
<div class="c r" style="left:1645px;top:648px;width:94px;color:#9c0006;-webkit-text-stroke:.28px #ffc7ce;">38.5</div>
<div class="c c d" style="left:37px;top:678px;width:104px;-webkit-text-stroke:.28px #fff;">2021/6/22</div>
<div class="c c n" style="left:142px;top:678px;width:87px;-webkit-text-stroke:.28px #fff;">28,513.07</div>
<div class="c c n" style="left:230px;top:678px;width:87px;-webkit-text-stroke:.28px #fff;">28,895.26</div>
<div class="c c n" style="left:318px;top:678px;width:87px;-webkit-text-stroke:.28px #fff;">28,494.46</div>
<div class="c c n" style="left:406px;top:678px;width:93px;-webkit-text-stroke:.28px #fff;">28,884.13</div>
<div class="c c" style="left:500px;top:678px;width:85px;-webkit-text-stroke:.28px #faa4a6;">873.2</div>
<div class="c c" style="left:586px;top:678px;width:85px;-webkit-text-stroke:.28px #fbc5c8;">3.1</div>
<div class="c c h" style="left:672px;top:678px;width:125px;-webkit-text-stroke:.28px #fff;">993,265,400</div>
<div class="c c" style="left:798px;top:678px;width:76px;color:#9c0006;">陽</div>
<div class="c c" style="left:875px;top:678px;width:61px;-webkit-text-stroke:.28px #fff;">1</div>
<div class="c r" style="left:937px;top:678px;width:116px;-webkit-text-stroke:.28px #fff;">873.2</div>
<div class="c r" style="left:1134px;top:678px;width:75px;-webkit-text-stroke:.28px #fff;">28834</div>
<div class="c r" style="left:1210px;top:678px;width:74px;color:#9c0006;-webkit-text-stroke:.28px #ffc7ce;">1.0017</div>
<div class="c r" style="left:1285px;top:678px;width:73px;-webkit-text-stroke:.28px #fff;">28794</div>
<div class="c r" style="left:1359px;top:678px;width:73px;color:#9c0006;-webkit-text-stroke:.28px #ffc7ce;">1.0031</div>
<div class="c r" style="left:1433px;top:678px;width:73px;-webkit-text-stroke:.28px #fff;">29008</div>
<div class="c r" style="left:1507px;top:678px;width:71px;color:#006100;-webkit-text-stroke:.28px #c6efce;">0.9957</div>
<div class="c r" style="left:1645px;top:678px;width:94px;color:#006100;-webkit-text-stroke:.28px #c6efce;">41.4</div>
<div class="c c d" style="left:37px;top:708px;width:104px;-webkit-text-stroke:.28px #fff;">2021/6/21</div>
<div class="c c n" style="left:142px;top:708px;width:87px;-webkit-text-stroke:.28px #fff;">28,506.84</div>
<div class="c c n" style="left:230px;top:708px;width:87px;-webkit-text-stroke:.28px #fff;">28,506.84</div>
<div class="c c n" style="left:318px;top:708px;width:87px;-webkit-text-stroke:.28px #fff;">27,795.86</div>
<div class="c c n" style="left:406px;top:708px;width:93px;-webkit-text-stroke:.28px #fff;">28,010.93</div>
<div class="c c" style="left:500px;top:708px;width:85px;-webkit-text-stroke:.28px #84cb97;">-953.15</div>
<div class="c c" style="left:586px;top:708px;width:85px;-webkit-text-stroke:.28px #a8dab6;">-3.3</div>
<div class="c c h" style="left:672px;top:708px;width:125px;-webkit-text-stroke:.28px #fff;">1,116,451,200</div>
<div class="c c" style="left:798px;top:708px;width:76px;color:#006100;">陰</div>
<div class="c c" style="left:875px;top:708px;width:61px;-webkit-text-stroke:.28px #5b9bd5;">4</div>
<div class="c r" style="left:937px;top:708px;width:116px;-webkit-text-stroke:.28px #fff;">-1430.37</div>
<div class="c c" style="left:1054px;top:708px;width:79px;color:#9c5700;">千</div>
<div class="c r" style="left:1134px;top:708px;width:75px;-webkit-text-stroke:.28px #fff;">28945</div>
<div class="c r" style="left:1210px;top:708px;width:74px;color:#006100;-webkit-text-stroke:.28px #c6efce;">0.9677</div>
<div class="c r" style="left:1285px;top:708px;width:73px;-webkit-text-stroke:.28px #fff;">28775</div>
<div class="c r" style="left:1359px;top:708px;width:73px;color:#006100;-webkit-text-stroke:.28px #c6efce;">0.9734</div>
<div class="c r" style="left:1433px;top:708px;width:73px;-webkit-text-stroke:.28px #fff;">29000</div>
<div class="c r" style="left:1507px;top:708px;width:71px;color:#006100;-webkit-text-stroke:.28px #c6efce;">0.9659</div>
<div class="c r" style="left:1645px;top:708px;width:94px;color:#006100;-webkit-text-stroke:.28px #c6efce;">50.2</div>
<div class="c c d" style="left:37px;top:738px;width:104px;-webkit-text-stroke:.28px #fff;">2021/6/18</div>
<div class="c c n" style="left:142px;top:738px;width:87px;-webkit-text-stroke:.28px #fff;">29,136.74</div>
<div class="c c n" style="left:230px;top:738px;width:87px;-webkit-text-stroke:.28px #fff;">29,136.74</div>
<div class="c c n" style="left:318px;top:738px;width:87px;-webkit-text-stroke:.28px #fff;">28,957.98</div>
<div class="c c n" style="left:406px;top:738px;width:93px;-webkit-text-stroke:.28px #fff;">28,964.08</div>
<div class="c c" style="left:500px;top:738px;width:85px;-webkit-text-stroke:.28px #f5f9f9;">-54.25</div>
<div class="c c" style="left:586px;top:738px;width:85px;-webkit-text-stroke:.28px #f7fafb;">-0.2</div>
<div class="c c h" style="left:672px;top:738px;width:125px;-webkit-text-stroke:.28px #fff;">1,071,606,700</div>
<div class="c c" style="left:798px;top:738px;width:76px;color:#006100;">陰</div>
<div class="c c" style="left:875px;top:738px;width:61px;-webkit-text-stroke:.28px #5b9bd5;">3</div>
<div class="c r" style="left:937px;top:738px;width:116px;-webkit-text-stroke:.28px #fff;">-477.22</div>
<div class="c r" style="left:1134px;top:738px;width:75px;-webkit-text-stroke:.28px #fff;">29175</div>
<div class="c r" style="left:1210px;top:738px;width:74px;color:#006100;-webkit-text-stroke:.28px #c6efce;">0.9928</div>
<div class="c r" style="left:1285px;top:738px;width:73px;-webkit-text-stroke:.28px #fff;">28768</div>
<div class="c r" style="left:1359px;top:738px;width:73px;color:#9c0006;-webkit-text-stroke:.28px #ffc7ce;">1.0068</div>
<div class="c r" style="left:1433px;top:738px;width:73px;-webkit-text-stroke:.28px #fff;">29016</div>
<div class="c r" style="left:1507px;top:738px;width:71px;color:#006100;-webkit-text-stroke:.28px #c6efce;">0.9982</div>
<div class="c r" style="left:1645px;top:738px;width:94px;color:#9c0006;-webkit-text-stroke:.28px #ffc7ce;">39.2</div>
<div class="c c d" style="left:37px;top:768px;width:104px;-webkit-text-stroke:.28px #fff;">2021/6/17</div>
<div class="c c n" style="left:142px;top:768px;width:87px;-webkit-text-stroke:.28px #fff;">29,149.34</div>
<div class="c c n" style="left:230px;top:768px;width:87px;-webkit-text-stroke:.28px #fff;">29,197.68</div>
<div class="c c n" style="left:318px;top:768px;width:87px;-webkit-text-stroke:.28px #fff;">28,875.39</div>
<div class="c c n" style="left:406px;top:768px;width:93px;-webkit-text-stroke:.28px #fff;">29,018.33</div>
<div class="c c" style="left:500px;top:768px;width:85px;-webkit-text-stroke:.28px #daeee1;">-272.68</div>
<div class="c c" style="left:586px;top:768px;width:85px;-webkit-text-stroke:.28px #e5f3eb;">-0.9</div>
<div class="c c h" style="left:672px;top:768px;width:125px;-webkit-text-stroke:.28px #fff;">997,590,500</div>
<div class="c c" style="left:798px;top:768px;width:76px;color:#006100;">陰</div>
<div class="c c" style="left:875px;top:768px;width:61px;-webkit-text-stroke:.28px #5b9bd5;">2</div>
<div class="c r" style="left:937px;top:768px;width:116px;-webkit-text-stroke:.28px #fff;">-422.97</div>
<div class="c r" style="left:1134px;top:768px;width:75px;-webkit-text-stroke:.28px #fff;">29172</div>
<div class="c r" style="left:1210px;top:768px;width:74px;color:#006100;-webkit-text-stroke:.28px #c6efce;">0.9947</div>
<div class="c r" style="left:1285px;top:768px;width:73px;-webkit-text-stroke:.28px #fff;">28733</div>
<div class="c r" style="left:1359px;top:768px;width:73px;color:#9c0006;-webkit-text-stroke:.28px #ffc7ce;">1.0099</div>
<div class="c r" style="left:1433px;top:768px;width:73px;-webkit-text-stroke:.28px #fff;">29020</div>
<div class="c r" style="left:1507px;top:768px;width:71px;color:#006100;-webkit-text-stroke:.28px #c6efce;">1</div>
<div class="c r" style="left:1645px;top:768px;width:94px;color:#006100;-webkit-text-stroke:.28px #c6efce;">41.9</div>
<div class="c c d" style="left:37px;top:798px;width:104px;-webkit-text-stroke:.28px #fff;">2021/6/16</div>
<div class="c c n" style="left:142px;top:798px;width:87px;-webkit-text-stroke:.28px #fff;">29,306.14</div>
<div class="c c n" style="left:230px;top:798px;width:87px;-webkit-text-stroke:.28px #fff;">29,434.10</div>
<div class="c c n" style="left:318px;top:798px;width:87px;-webkit-text-stroke:.28px #fff;">29,263.72</div>
<div class="c c n" style="left:406px;top:798px;width:93px;-webkit-text-stroke:.28px #fff;">29,291.01</div>
<div class="c c" style="left:500px;top:798px;width:85px;-webkit-text-stroke:.28px #e9f4ef;">-150.29</div>
<div class="c c" style="left:586px;top:798px;width:85px;-webkit-text-stroke:.28px #eff7f4;">-0.5</div>
<div class="c c h" style="left:672px;top:798px;width:125px;-webkit-text-stroke:.28px #fff;">884,022,500</div>
<div class="c c" style="left:798px;top:798px;width:76px;color:#006100;">陰</div>
<div class="c c" style="left:875px;top:798px;width:61px;-webkit-text-stroke:.28px #5b9bd5;">1</div>
<div class="c r" style="left:937px;top:798px;width:116px;-webkit-text-stroke:.28px #fff;">-150.29</div>
<div class="c r" style="left:1134px;top:798px;width:75px;-webkit-text-stroke:.28px #fff;">29160</div>
<div class="c r" style="left:1210px;top:798px;width:74px;color:#9c0006;-webkit-text-stroke:.28px #ffc7ce;">1.0045</div>
<div class="c r" style="left:1285px;top:798px;width:73px;-webkit-text-stroke:.28px #fff;">28670</div>
<div class="c r" style="left:1359px;top:798px;width:73px;color:#9c0006;-webkit-text-stroke:.28px #ffc7ce;">1.0217</div>
<div class="c r" style="left:1433px;top:798px;width:73px;-webkit-text-stroke:.28px #fff;">29032</div>
<div class="c r" style="left:1507px;top:798px;width:71px;color:#9c0006;-webkit-text-stroke:.28px #ffc7ce;">1.0089</div>
<div class="c r" style="left:1645px;top:798px;width:94px;color:#9c0006;-webkit-text-stroke:.28px #ffc7ce;">38.9</div>
<div class="c c d" style="left:37px;top:828px;width:104px;-webkit-text-stroke:.28px #fff;">2021/6/15</div>
<div class="c c n" style="left:142px;top:828px;width:87px;-webkit-text-stroke:.28px #fff;">29,256.03</div>
<div class="c c n" style="left:230px;top:828px;width:87px;-webkit-text-stroke:.28px #fff;">29,480.85</div>
<div class="c c n" style="left:318px;top:828px;width:87px;-webkit-text-stroke:.28px #fff;">29,235.71</div>
<div class="c c n" style="left:406px;top:828px;width:93px;-webkit-text-stroke:.28px #fff;">29,441.30</div>
<div class="c c" style="left:500px;top:828px;width:85px;-webkit-text-stroke:.28px #fbe0e3;">279.5</div>
<div class="c c" style="left:586px;top:828px;width:85px;-webkit-text-stroke:.28px #fceaed;">1</div>
<div class="c c h" style="left:672px;top:828px;width:125px;-webkit-text-stroke:.28px #fff;">807,759,600</div>
<div class="c c" style="left:798px;top:828px;width:76px;color:#9c0006;">陽</div>
<div class="c c" style="left:875px;top:828px;width:61px;-webkit-text-stroke:.28px #fff;">2</div>
<div class="c r" style="left:937px;top:828px;width:116px;-webkit-text-stroke:.28px #fff;">492.57</div>
<div class="c r" style="left:1134px;top:828px;width:75px;-webkit-text-stroke:.28px #fff;">29074</div>
<div class="c r" style="left:1210px;top:828px;width:74px;color:#9c0006;-webkit-text-stroke:.28px #ffc7ce;">1.0126</div>
<div class="c r" style="left:1285px;top:828px;width:73px;-webkit-text-stroke:.28px #fff;">28624</div>
<div class="c r" style="left:1359px;top:828px;width:73px;color:#9c0006;-webkit-text-stroke:.28px #ffc7ce;">1.0285</div>
<div class="c r" style="left:1433px;top:828px;width:73px;-webkit-text-stroke:.28px #fff;">29048</div>
<div class="c r" style="left:1507px;top:828px;width:71px;color:#9c0006;-webkit-text-stroke:.28px #ffc7ce;">1.0135</div>
<div class="c r" style="left:1645px;top:828px;width:94px;color:#9c0006;-webkit-text-stroke:.28px #ffc7ce;">38.2</div>
<div class="c c d" style="left:37px;top:858px;width:104px;-webkit-text-stroke:.28px #fff;">2021/6/14</div>
<div class="c c n" style="left:142px;top:858px;width:87px;-webkit-text-stroke:.28px #fff;">29,153.11</div>
<div class="c c n" style="left:230px;top:858px;width:87px;-webkit-text-stroke:.28px #fff;">29,208.35</div>
<div class="c c n" style="left:318px;top:858px;width:87px;-webkit-text-stroke:.28px #fff;">29,026.27</div>
<div class="c c n" style="left:406px;top:858px;width:93px;-webkit-text-stroke:.28px #fff;">29,161.80</div>
<div class="c c" style="left:500px;top:858px;width:85px;-webkit-text-stroke:.28px #fbe6e9;">213.07</div>
<div class="c c" style="left:586px;top:858px;width:85px;-webkit-text-stroke:.28px #fcf0f3;">0.7</div>
<div class="c c h" style="left:672px;top:858px;width:125px;-webkit-text-stroke:.28px #fff;">854,234,100</div>
<div class="c c" style="left:798px;top:858px;width:76px;color:#9c0006;">陽</div>
<div class="c c" style="left:875px;top:858px;width:61px;-webkit-text-stroke:.28px #fff;">1</div>
<div class="c r" style="left:937px;top:858px;width:116px;-webkit-text-stroke:.28px #fff;">213.07</div>
<div class="c r" style="left:1134px;top:858px;width:75px;-webkit-text-stroke:.28px #fff;">28979</div>
<div class="c r" style="left:1210px;top:858px;width:74px;color:#9c0006;-webkit-text-stroke:.28px #ffc7ce;">1.0063</div>
<div class="c r" style="left:1285px;top:858px;width:73px;-webkit-text-stroke:.28px #fff;">28591</div>
<div class="c r" style="left:1359px;top:858px;width:73px;color:#9c0006;-webkit-text-stroke:.28px #ffc7ce;">1.02</div>
<div class="c r" style="left:1433px;top:858px;width:73px;-webkit-text-stroke:.28px #fff;">29056</div>
<div class="c r" style="left:1507px;top:858px;width:71px;color:#9c0006;-webkit-text-stroke:.28px #ffc7ce;">1.0037</div>
<div class="c r" style="left:1645px;top:858px;width:94px;color:#9c0006;-webkit-text-stroke:.28px #ffc7ce;">38.5</div>
<div class="c c d" style="left:37px;top:888px;width:104px;-webkit-text-stroke:.28px #fff;">2021/6/11</div>
<div class="c c n" style="left:142px;top:888px;width:87px;-webkit-text-stroke:.28px #fff;">29,030.04</div>
<div class="c c n" style="left:230px;top:888px;width:87px;-webkit-text-stroke:.28px #fff;">29,080.89</div>
<div class="c c n" style="left:318px;top:888px;width:87px;-webkit-text-stroke:.28px #fff;">28,839.54</div>
<div class="c c n" style="left:406px;top:888px;width:93px;-webkit-text-stroke:.28px #fff;">28,948.73</div>
<div class="c c" style="left:500px;top:888px;width:85px;-webkit-text-stroke:.28px #fbfbfe;">-9.83</div>
<div class="c c" style="left:586px;top:888px;width:85px;-webkit-text-stroke:.28px #fcfcff;">0</div>
<div class="c c h" style="left:672px;top:888px;width:125px;-webkit-text-stroke:.28px #fff;">1,221,150,000</div>
<div class="c c" style="left:798px;top:888px;width:76px;color:#006100;">陰</div>
<div class="c c" style="left:875px;top:888px;width:61px;-webkit-text-stroke:.28px #fff;">1</div>
<div class="c r" style="left:937px;top:888px;width:116px;-webkit-text-stroke:.28px #fff;">-9.83</div>
<div class="c r" style="left:1134px;top:888px;width:75px;-webkit-text-stroke:.28px #fff;">28950</div>
<div class="c r" style="left:1210px;top:888px;width:74px;color:#006100;-webkit-text-stroke:.28px #c6efce;">0.9999</div>
<div class="c r" style="left:1285px;top:888px;width:73px;-webkit-text-stroke:.28px #fff;">28605</div>
<div class="c r" style="left:1359px;top:888px;width:73px;color:#9c0006;-webkit-text-stroke:.28px #ffc7ce;">1.012</div>
<div class="c r" style="left:1433px;top:888px;width:73px;-webkit-text-stroke:.28px #fff;">29068</div>
<div class="c r" style="left:1507px;top:888px;width:71px;color:#006100;-webkit-text-stroke:.28px #c6efce;">0.9959</div>
<div class="c r" style="left:1645px;top:888px;width:94px;color:#006100;-webkit-text-stroke:.28px #c6efce;">42.2</div>
<div class="c c d" style="left:37px;top:918px;width:104px;-webkit-text-stroke:.28px #fff;">2021/6/10</div>
<div class="c c n" style="left:142px;top:918px;width:87px;-webkit-text-stroke:.28px #fff;">28,799.74</div>
<div class="c c n" style="left:230px;top:918px;width:87px;-webkit-text-stroke:.28px #fff;">29,007.53</div>
<div class="c c n" style="left:318px;top:918px;width:87px;-webkit-text-stroke:.28px #fff;">28,799.74</div>
<div class="c c n" style="left:406px;top:918px;width:93px;-webkit-text-stroke:.28px #fff;">28,958.56</div>
<div class="c c" style="left:500px;top:918px;width:85px;-webkit-text-stroke:.28px #fcf2f5;">97.76</div>
<div class="c c" style="left:586px;top:918px;width:85px;-webkit-text-stroke:.28px #fcf7fa;">0.3</div>
<div class="c c h" style="left:672px;top:918px;width:125px;-webkit-text-stroke:.28px #fff;">873,742,000</div>
<div class="c c" style="left:798px;top:918px;width:76px;color:#9c0006;">陽</div>
<div class="c c" style="left:875px;top:918px;width:61px;-webkit-text-stroke:.28px #fff;">1</div>
<div class="c r" style="left:937px;top:918px;width:116px;-webkit-text-stroke:.28px #fff;">97.76</div>
<div class="c r" style="left:1134px;top:918px;width:75px;-webkit-text-stroke:.28px #fff;">28949</div>
<div class="c r" style="left:1210px;top:918px;width:74px;color:#9c0006;-webkit-text-stroke:.28px #ffc7ce;">1.0003</div>
<div class="c r" style="left:1285px;top:918px;width:73px;-webkit-text-stroke:.28px #fff;">28622</div>
<div class="c r" style="left:1359px;top:918px;width:73px;color:#9c0006;-webkit-text-stroke:.28px #ffc7ce;">1.0118</div>
<div class="c r" style="left:1433px;top:918px;width:73px;-webkit-text-stroke:.28px #fff;">29082</div>
<div class="c r" style="left:1507px;top:918px;width:71px;color:#006100;-webkit-text-stroke:.28px #c6efce;">0.9958</div>
<div class="c r" style="left:1645px;top:918px;width:94px;color:#9c0006;-webkit-text-stroke:.28px #ffc7ce;">38.4</div>
<div class="c c d" style="left:37px;top:948px;width:104px;-webkit-text-stroke:.28px #fff;">2021/6/9</div>
<div class="c c n" style="left:142px;top:948px;width:87px;-webkit-text-stroke:.28px #fff;">28,901.56</div>
<div class="c c n" style="left:230px;top:948px;width:87px;-webkit-text-stroke:.28px #fff;">28,932.03</div>
<div class="c c n" style="left:318px;top:948px;width:87px;-webkit-text-stroke:.28px #fff;">28,801.83</div>
<div class="c c n" style="left:406px;top:948px;width:93px;-webkit-text-stroke:.28px #fff;">28,860.80</div>
<div class="c c" style="left:500px;top:948px;width:85px;-webkit-text-stroke:.28px #eff7f4;">-102.76</div>
<div class="c c" style="left:586px;top:948px;width:85px;-webkit-text-stroke:.28px #f2f8f6;">-0.4</div>
<div class="c c h" style="left:672px;top:948px;width:125px;-webkit-text-stroke:.28px #fff;">994,452,100</div>
<div class="c c" style="left:798px;top:948px;width:76px;color:#006100;">陰</div>
<div class="c c" style="left:875px;top:948px;width:61px;-webkit-text-stroke:.28px #5b9bd5;">3</div>
<div class="c r" style="left:937px;top:948px;width:116px;-webkit-text-stroke:.28px #fff;">-80.72</div>
<div class="c r" style="left:1134px;top:948px;width:75px;-webkit-text-stroke:.28px #fff;">28969</div>
<div class="c r" style="left:1210px;top:948px;width:74px;color:#006100;-webkit-text-stroke:.28px #c6efce;">0.9963</div>
<div class="c r" style="left:1285px;top:948px;width:73px;-webkit-text-stroke:.28px #fff;">28636</div>
<div class="c r" style="left:1359px;top:948px;width:73px;color:#9c0006;-webkit-text-stroke:.28px #ffc7ce;">1.0078</div>
<div class="c r" style="left:1433px;top:948px;width:73px;-webkit-text-stroke:.28px #fff;">29095</div>
<div class="c r" style="left:1507px;top:948px;width:71px;color:#006100;-webkit-text-stroke:.28px #c6efce;">0.992</div>
<div class="c r" style="left:1645px;top:948px;width:94px;color:#006100;-webkit-text-stroke:.28px #c6efce;">40.9</div>
<div style="left:36px;top:260px;width:1px;height:28px;background:#ababab;"></div>
<div style="left:141px;top:260px;width:1px;height:28px;background:#ababab;"></div>
<div style="left:229px;top:260px;width:1px;height:28px;background:#ababab;"></div>
<div style="left:317px;top:260px;width:1px;height:28px;background:#ababab;"></div>
<div style="left:405px;top:260px;width:1px;height:28px;background:#ababab;"></div>
<div style="left:499px;top:260px;width:1px;height:28px;background:#ababab;"></div>
<div style="left:585px;top:260px;width:1px;height:28px;background:#ababab;"></div>
<div style="left:671px;top:260px;width:1px;height:28px;background:#ababab;"></div>
<div style="left:797px;top:260px;width:1px;height:28px;background:#ababab;"></div>
<div style="left:874px;top:260px;width:1px;height:28px;background:#ababab;"></div>
<div style="left:936px;top:260px;width:1px;height:28px;background:#ababab;"></div>
<div style="left:1053px;top:260px;width:1px;height:28px;background:#ababab;"></div>
<div style="left:1133px;top:260px;width:1px;height:28px;background:#ababab;"></div>
<div style="left:1209px;top:260px;width:1px;height:28px;background:#ababab;"></div>
<div style="left:1284px;top:260px;width:1px;height:28px;background:#ababab;"></div>
<div style="left:1358px;top:260px;width:1px;height:28px;background:#ababab;"></div>
<div style="left:1432px;top:260px;width:1px;height:28px;background:#ababab;"></div>
<div style="left:1506px;top:260px;width:1px;height:28px;background:#ababab;"></div>
<div style="left:1578px;top:260px;width:1px;height:28px;background:#ababab;"></div>
<div style="left:1644px;top:260px;width:1px;height:28px;background:#ababab;"></div>
<div style="left:1739px;top:260px;width:1px;height:28px;background:#ababab;"></div>
<div style="left:1826px;top:260px;width:1px;height:28px;background:#ababab;"></div>
<div style="left:0px;top:317px;width:36px;height:1px;background:#ababab;"></div>
<div style="left:0px;top:347px;width:36px;height:1px;background:#ababab;"></div>
<div style="left:0px;top:377px;width:36px;height:1px;background:#ababab;"></div>
<div style="left:0px;top:407px;width:36px;height:1px;background:#ababab;"></div>
<div style="left:0px;top:437px;width:36px;height:1px;background:#ababab;"></div>
<div style="left:0px;top:467px;width:36px;height:1px;background:#ababab;"></div>
<div style="left:0px;top:497px;width:36px;height:1px;background:#ababab;"></div>
<div style="left:0px;top:527px;width:36px;height:1px;background:#ababab;"></div>
<div style="left:0px;top:557px;width:36px;height:1px;background:#ababab;"></div>
<div style="left:0px;top:587px;width:36px;height:1px;background:#ababab;"></div>
<div style="left:0px;top:617px;width:36px;height:1px;background:#ababab;"></div>
<div style="left:0px;top:647px;width:36px;height:1px;background:#ababab;"></div>
<div style="left:0px;top:677px;width:36px;height:1px;background:#ababab;"></div>
<div style="left:0px;top:707px;width:36px;height:1px;background:#ababab;"></div>
<div style="left:0px;top:737px;width:36px;height:1px;background:#ababab;"></div>
<div style="left:0px;top:767px;width:36px;height:1px;background:#ababab;"></div>
<div style="left:0px;top:797px;width:36px;height:1px;background:#ababab;"></div>
<div style="left:0px;top:827px;width:36px;height:1px;background:#ababab;"></div>
<div style="left:0px;top:857px;width:36px;height:1px;background:#ababab;"></div>
<div style="left:0px;top:887px;width:36px;height:1px;background:#ababab;"></div>
<div style="left:0px;top:917px;width:36px;height:1px;background:#ababab;"></div>
<div style="left:0px;top:947px;width:36px;height:1px;background:#ababab;"></div>
<div style="left:0px;top:977px;width:36px;height:1px;background:#ababab;"></div>
<div style="left:0px;top:287px;width:1895px;height:1px;background:#9e9e9e;"></div>
<div style="left:36px;top:288px;width:1px;height:688px;background:#9e9e9e;"></div>
<svg style="left:11px;top:263px;" width="22" height="21" viewBox="0 0 22 21"><path d="M22 0V21H0Z" fill="#b4b4b4"/></svg>
<div style="left:799px;top:319px;width:846px;height:57px;background:rgba(0,0,0,.224);"></div>
<div style="left:1645px;top:319px;width:92px;height:29px;background:rgba(0,0,0,.224);"></div>
<div style="left:797px;top:286px;width:943px;height:2px;background:#137040;"></div>
<div style="left:35px;top:317px;width:2px;height:61px;background:#137040;"></div>
<div style="left:798px;top:318px;width:940px;height:59px;border:1px solid #fff"></div>
<div style="left:796px;top:316px;width:944px;height:63px;border:2px solid #137040"></div>
<div style="left:1735px;top:374px;width:7px;height:7px;background:#fff;"></div>
<div style="left:1736px;top:375px;width:5px;height:5px;background:#137040;"></div>
<div style="left:1742px;top:381px;width:28px;height:28px;background:#fff;border:1px solid #217346"></div>
<svg style="left:1746px;top:385px;" width="20" height="20" viewBox="0 0 20 20"><path d="M6 0L1 9H4.500L2 16L9 6H5.500L8 0Z" fill="#f2c14e"/><path d="M9 2.500H18.500V17.500H2.500V14" fill="none" stroke="#6a6a6a" stroke-width="1.300"/><rect x="9" y="5.500" width="5" height="2.400" fill="#dd5b3f"/><rect x="7" y="9.200" width="9" height="2.400" fill="#4a7ebb"/><rect x="7" y="12.900" width="7" height="2.400" fill="#5fa88a"/></svg>
</div>
<div style="left:1895px;top:258px;width:25px;height:718px;background:#e6e6e6;"></div>
<div style="left:1894px;top:288px;width:1px;height:688px;background:#9e9e9e;"></div>
<div style="left:0px;top:0px;width:1920px;height:81px;background:#217346;"></div>
<svg style="left:1300px;top:0px;" width="620" height="81" viewBox="0 0 620 81"><defs><filter id="bl"><feGaussianBlur stdDeviation="1.300"/></filter></defs>
<g fill="#22643f" filter="url(#bl)" opacity=".800">
<path d="M30 0C24 12 28 26 40 34C34 40 28 42 22 40C26 48 38 48 46 40C70 46 100 44 120 40C150 48 190 46 215 40C235 36 246 24 244 0Z"/>
<path d="M138 46C160 42 200 44 236 42C244 50 236 58 214 58C190 60 160 58 140 54C134 52 134 48 138 46Z"/>
<path d="M268 0C262 16 270 34 290 42C320 54 380 56 420 48C450 42 466 28 468 0Z"/>
<path d="M486 0C482 14 490 28 506 34C520 44 540 48 560 44C590 40 610 30 620 24V0Z"/>
<circle cx="556" cy="44" r="12"/>
</g></svg>
<div style="left:76px;top:43px;width:61px;height:38px;background:#f3f3f3;"></div>
<div class="t" id="t1" style="top:50.5px;height:21px;line-height:21px;font-size:15px;color:#ffffff;left:16px;"><span style="letter-spacing:-4.50px;position:relative;left:-2.25px">ファイル</span></div>
<div class="t" id="t2" style="top:50.5px;height:21px;line-height:21px;font-size:15px;color:#217346;left:88px;"><span style="letter-spacing:-2.85px;position:relative;left:-1.43px">ホーム</span></div>
<div class="t" id="t3" style="top:50.5px;height:21px;line-height:21px;font-size:15px;color:#ffffff;left:151px;transform:scaleX(0.9662);">挿入</div>
<div class="t" id="t4" style="top:50.5px;height:21px;line-height:21px;font-size:15px;color:#ffffff;left:208px;"><span style="letter-spacing:-3.49px;position:relative;left:-1.74px">ページ</span> <span style="letter-spacing:-3.49px;position:relative;left:-1.74px">レイアウト</span></div>
<div class="t" id="t5" style="top:50.5px;height:21px;line-height:21px;font-size:15px;color:#ffffff;left:331px;transform:scaleX(0.9662);">数式</div>
<div class="t" id="t6" style="top:50.5px;height:21px;line-height:21px;font-size:15px;color:#ffffff;left:388px;"><span style="letter-spacing:-3.67px;position:relative;left:-1.84px">データ</span></div>
<div class="t" id="t7" style="top:50.5px;height:21px;line-height:21px;font-size:15px;color:#ffffff;left:449px;transform:scaleX(0.9662);">校閲</div>
<div class="t" id="t8" style="top:50.5px;height:21px;line-height:21px;font-size:15px;color:#ffffff;left:506px;">表示</div>
<div class="t" id="t9" style="top:50.5px;height:21px;line-height:21px;font-size:15px;color:#ffffff;left:563px;"><span style="letter-spacing:-3.01px;position:relative;left:-1.50px">ヘルプ</span></div>
<div class="t" id="t10" style="top:50.5px;height:21px;line-height:21px;font-size:15px;color:#ffffff;left:662px;">何<span style="letter-spacing:-3.41px;position:relative;left:-1.70px">をしますか</span></div>
<div class="t" id="t11" style="top:8.0px;height:22px;line-height:22px;font-size:15.5px;color:#ffffff;left:867px;transform:scaleX(1.0423);">計算2020210709&nbsp; -&nbsp; Excel</div>
<div class="t" id="t12" style="top:8.0px;height:22px;line-height:22px;font-size:15.5px;color:#ffffff;left:1380px;transform:scaleX(1.0627);">dryyourtearswithlove1@gmail.com</div>
<div style="left:1647px;top:4px;width:30px;height:30px;border-radius:15px;background:#d2d2d2"></div>
<div class="t" id="t13" style="top:11.0px;height:17px;line-height:17px;font-size:12px;color:#6a6a6a;left:1658.0px;transform:scaleX(0.9225);">D</div>
<div class="t" id="t14" style="top:52.5px;height:21px;line-height:21px;font-size:15px;color:#ffffff;left:1863px;transform:scaleX(0.9328);">共有</div>
<svg style="left:27px;top:12px;" width="16" height="16" viewBox="0 0 16 16"><path d="M.8.8H12.5L15.2 3.5V15.2H.8Z" fill="none" stroke="#fff" stroke-width="1.6"/><rect x="3.5" y="1" width="8" height="5" fill="#fff"/><rect x="4" y="10" width="8" height="5" fill="#fff"/><rect x="6" y="11.5" width="2.5" height="3.5" fill="#217346"/></svg>
<svg style="left:60px;top:11px;" width="20" height="17" viewBox="0 0 20 17"><path d="M1.5 6.5H12A5 5 0 0 1 12 16H7" fill="none" stroke="#fff" stroke-width="2.2"/><path d="M7.5 .8L1.8 6.5L7.5 12.2" fill="none" stroke="#fff" stroke-width="2.2"/></svg>
<svg style="left:88px;top:16px;" width="8" height="6" viewBox="0 0 8 6"><path d="M1 1L4 4L7 1" fill="none" stroke="#fff" stroke-width="1.2"/></svg>
<svg style="left:108px;top:11px;" width="20" height="17" viewBox="0 0 20 17"><g opacity=".42"><path d="M18.5 6.5H8A5 5 0 0 0 8 16H13" fill="none" stroke="#fff" stroke-width="2.2"/><path d="M12.5 .8L18.2 6.5L12.500 12.2" fill="none" stroke="#fff" stroke-width="2.2"/></g></svg>
<svg style="left:136px;top:16px;" width="8" height="6" viewBox="0 0 8 6"><path d="M1 1L4 4L7 1" fill="none" stroke="#fff" stroke-width="1.2" opacity=".42"/></svg>
<svg style="left:161px;top:17px;" width="9" height="9" viewBox="0 0 9 9"><rect x="1" y="1" width="7" height="1.3" fill="#fff"/><path d="M1.5 4.5H7.5L4.5 7.8Z" fill="#fff"/></svg>
<svg style="left:630px;top:51px;" width="17" height="23" viewBox="0 0 17 23"><path d="M8.5 1.2A6.3 6.3 0 0 0 4.6 12.4C5.4 13.3 5.6 14.2 5.6 15.5H11.4C11.4 14.2 11.600 13.300 12.4 12.400A6.3 6.3 0 0 0 8.5 1.2Z" fill="none" stroke="#fff" stroke-width="1.4"/><path d="M5.8 17.8H11.2M6.3 20H10.7" stroke="#fff" stroke-width="1.3"/></svg>
<svg style="left:1710px;top:11px;" width="20" height="17" viewBox="0 0 20 17"><rect x=".8" y=".8" width="18" height="15" fill="none" stroke="#fff" stroke-width="1.5"/><path d="M1 4.2H19" stroke="#fff" stroke-width="1.5"/><path d="M10 14V7M6.8 10L10 6.800L13.200 10" fill="none" stroke="#fff" stroke-width="1.5"/></svg>
<div style="left:1770px;top:19px;width:14px;height:1px;background:#fff;"></div>
<svg style="left:1827px;top:12px;" width="15" height="15" viewBox="0 0 15 15"><rect x=".8" y="3.600" width="10" height="10" fill="none" stroke="#fff" stroke-width="1.5"/><path d="M3.800 3.5V.8H14V11H11" fill="none" stroke="#fff" stroke-width="1.5"/></svg>
<svg style="left:1883px;top:12px;" width="15" height="15" viewBox="0 0 15 15"><path d="M1 1L14 14M14 1L1 14" stroke="#fff" stroke-width="1.6"/></svg>
<svg style="left:1839px;top:52px;" width="20" height="22" viewBox="0 0 20 22"><circle cx="9" cy="6.500" r="4.800" fill="none" stroke="#fff" stroke-width="1.4"/><path d="M1 20C1.500 14.500 4.500 12.200 8 12.200C10 12.200 11.500 12.800 12.500 13.800" fill="none" stroke="#fff" stroke-width="1.4"/><path d="M14.500 12.500V20.500M10.500 16.500H18.500" stroke="#fff" stroke-width="1.4"/></svg>
<div style="left:0px;top:81px;width:1920px;height:116px;background:#f3f3f3;"></div>
<div style="left:0px;top:197px;width:1920px;height:1px;background:#d6d6d6;"></div>
<div style="left:245px;top:86px;width:1px;height:106px;background:#c8c8c8;"></div>
<div style="left:590px;top:86px;width:1px;height:106px;background:#c8c8c8;"></div>
<div style="left:977px;top:86px;width:1px;height:106px;background:#c8c8c8;"></div>
<div style="left:1171px;top:86px;width:1px;height:106px;background:#c8c8c8;"></div>
<div style="left:1400px;top:86px;width:1px;height:106px;background:#c8c8c8;"></div>
<div style="left:1575px;top:86px;width:1px;height:106px;background:#c8c8c8;"></div>
<div style="left:1848px;top:86px;width:1px;height:106px;background:#c8c8c8;"></div>
<svg style="left:24px;top:89px;" width="35" height="40" viewBox="0 0 35 40"><rect x="0" y="5" width="27" height="31" rx="1.500" fill="#eec579"/>
<path d="M6 5.500V3.500H10.500V1.200H16.500V3.500H21V8H6Z" fill="#7a7a7a"/><rect x="12" y="2.500" width="3" height="2" fill="#f3f3f3"/>
<path d="M20.500 20H29.500L33.500 24V38.500H20.500Z" fill="#fff" stroke="#7a7a7a" stroke-width="1"/><path d="M29.500 20V24H33.500" fill="none" stroke="#7a7a7a" stroke-width="1"/></svg>
<div class="t" id="t15" style="top:129.5px;height:21px;line-height:21px;font-size:15px;color:#262626;left:12px;">貼<span style="letter-spacing:-4.50px;position:relative;left:-2.25px">り</span>付<span style="letter-spacing:-4.50px;position:relative;left:-2.25px">け</span></div>
<svg style="left:36px;top:157.5px;" width="8" height="5" viewBox="0 0 8 5"><path d="M.800 .800L4 4L7.200 .800" fill="none" stroke="#555" stroke-width="1.100"/></svg>
<svg style="left:70px;top:90px;" width="18" height="18" viewBox="0 0 18 18"><path d="M4 0L13 11.500M14 0L5 11.500" stroke="#6a6a6a" stroke-width="1.600" fill="none"/>
<circle cx="4.200" cy="14" r="2.700" fill="none" stroke="#3c78c0" stroke-width="1.400"/><circle cx="13.800" cy="14" r="2.700" fill="none" stroke="#3c78c0" stroke-width="1.400"/></svg>
<div class="t" id="t16" style="top:88.5px;height:21px;line-height:21px;font-size:15px;color:#262626;left:94px;transform:scaleX(0.9400);">切<span style="letter-spacing:-4.50px;position:relative;left:-2.25px">り</span>取<span style="letter-spacing:-4.50px;position:relative;left:-2.25px">り</span></div>
<svg style="left:70px;top:118px;" width="19" height="19" viewBox="0 0 19 19"><path d="M1.500 .500H8L11 3.500V12.500H1.500Z" fill="#fff" stroke="#6a6a6a"/><path d="M7.500 6.500H14L17.500 10V18.500H7.500Z" fill="#fff" stroke="#6a6a6a"/>
<path d="M3.500 4.500H7M3.500 7H6M3.500 9.500H6M9.500 11H15.500M9.500 13.500H15.500M9.500 16H15.500" stroke="#3c78c0" stroke-width="1"/></svg>
<div class="t" id="t17" style="top:117.5px;height:21px;line-height:21px;font-size:15px;color:#262626;left:94px;"><span style="letter-spacing:-4.34px;position:relative;left:-2.17px">コピー</span></div>
<svg style="left:141px;top:124.5px;" width="8" height="5" viewBox="0 0 8 5"><path d="M.800 .800L4 4L7.200 .800" fill="none" stroke="#555" stroke-width="1.100"/></svg>
<svg style="left:71px;top:148px;" width="18" height="17" viewBox="0 0 18 17"><path d="M0 8.500L6.500 5L10 11.500L5.500 16.500Z" fill="#eec579"/><path d="M6.500 5L11.500 2L14.500 7.500L10 11Z" fill="#6a6a6a"/><path d="M12.500 3L16 .500L17.500 3L14 5.500Z" fill="#444"/></svg>
<div class="t" id="t18" style="top:146.5px;height:21px;line-height:21px;font-size:15px;color:#262626;left:94px;">書式<span style="letter-spacing:-3.54px;position:relative;left:-1.77px">のコピー</span>/貼<span style="letter-spacing:-3.54px;position:relative;left:-1.77px">り</span>付<span style="letter-spacing:-3.54px;position:relative;left:-1.77px">け</span></div>
<div class="t" id="t19" style="top:175.5px;height:21px;line-height:21px;font-size:15px;color:#262626;left:75px;"><span style="letter-spacing:-4.43px;position:relative;left:-2.22px">クリップボード</span></div>
<svg style="left:231px;top:182.5px;" width="10" height="10" viewBox="0 0 10 10"><path d="M1 8.500V.500" stroke="#9a9a9a" stroke-width="1.200" fill="none"/><path d="M.500 .500H8.500" stroke="#333" stroke-width="1.100" fill="none"/><path d="M3 2.500L8 7.500" stroke="#333" stroke-width="1" fill="none"/><path d="M4.500 8H9" stroke="#333" stroke-width="1.100"/><path d="M8.800 3.500V8.500" stroke="#8a8a8a" stroke-width="1.100"/></svg>
<div style="left:256px;top:94px;width:213px;height:29px;background:#fff;border:1px solid #ababab"></div>
<div style="left:471px;top:94px;width:49px;height:29px;background:#fff;border:1px solid #ababab"></div>
<div class="t" id="t20" style="top:98.5px;height:21px;line-height:21px;font-size:15px;color:#1a1a1a;left:259px;">游<span style="letter-spacing:-4.26px;position:relative;left:-2.13px">ゴシック</span></div>
<div class="t" id="t21" style="top:98.5px;height:21px;line-height:21px;font-size:15px;color:#1a1a1a;left:475px;transform:scaleX(1.0271);">11</div>
<svg style="left:456px;top:107px;" width="8" height="5" viewBox="0 0 8 5"><path d="M0 0H8L4 4.500Z" fill="#555"/></svg>
<svg style="left:507px;top:107px;" width="8" height="5" viewBox="0 0 8 5"><path d="M0 0H8L4 4.500Z" fill="#555"/></svg>
<div class="t" id="t22" style="top:99.5px;height:20px;line-height:20px;font-size:14.5px;color:#666;font-weight:bold;left:530px;transform:scaleX(1.1446);">A</div>
<svg style="left:541px;top:98px;" width="6" height="4" viewBox="0 0 6 4"><path d="M0 3.500H6L3 0Z" fill="#3c78c0"/></svg>
<div class="t" id="t23" style="top:102.0px;height:17px;line-height:17px;font-size:12px;color:#666;font-weight:bold;left:560.5px;transform:scaleX(1.1532);">A</div>
<svg style="left:568px;top:99px;" width="6" height="4" viewBox="0 0 6 4"><path d="M0 0H6L3 3.500Z" fill="#3c78c0"/></svg>
<div class="t" id="t24" style="top:136.0px;height:22px;line-height:22px;font-size:16px;color:#444;font-weight:bold;left:264px;transform:scaleX(0.8649);">B</div>
<div class="t" id="t25" style="top:135.0px;height:24px;line-height:24px;font-size:17px;color:#444;font-weight:bold;font-family:'Liberation Serif',serif;left:297px;transform:scaleX(1.2075);"><i>I</i></div>
<div class="t" id="t26" style="top:135.0px;height:22px;line-height:22px;font-size:16px;color:#444;font-weight:bold;left:324px;transform:scaleX(0.9514);">U</div>
<div style="left:324px;top:154px;width:11px;height:1px;background:#444;"></div>
<svg style="left:349px;top:144.5px;" width="8" height="5" viewBox="0 0 8 5"><path d="M.800 .800L4 4L7.200 .800" fill="none" stroke="#555" stroke-width="1.100"/></svg>
<div style="left:367px;top:134px;width:1px;height:27px;background:#d0d0d0;"></div>
<svg style="left:377px;top:138px;" width="17" height="17" viewBox="0 0 17 17"><g stroke="#8a8a8a" stroke-width="1" stroke-dasharray="1 1.300"><path d="M.500 .500H16.500M.500 8.500H16.500M.500 0V16M8.500 0V16M16.500 0V16"/></g><rect x="0" y="15.500" width="17" height="1.300" fill="#555"/></svg>
<svg style="left:405px;top:144.5px;" width="8" height="5" viewBox="0 0 8 5"><path d="M.800 .800L4 4L7.200 .800" fill="none" stroke="#555" stroke-width="1.100"/></svg>
<div style="left:423px;top:134px;width:1px;height:27px;background:#d0d0d0;"></div>
<svg style="left:432px;top:136px;" width="21" height="16" viewBox="0 0 21 16"><path d="M4 10L10 3L16 9L9.500 15Z" fill="#fff" stroke="#555" stroke-width="1.100"/><path d="M8 5V1.800A1.500 1.500 0 0 1 11 1.800V4" fill="none" stroke="#555" stroke-width="1"/><path d="M15.500 6.500C18 8 18.500 10.500 17.500 13C16.500 11.500 16 9.500 15.500 6.500Z" fill="#3c78c0"/></svg>
<div style="left:432px;top:152px;width:20px;height:5px;background:#7030a0;"></div>
<svg style="left:461px;top:144.5px;" width="8" height="5" viewBox="0 0 8 5"><path d="M.800 .800L4 4L7.200 .800" fill="none" stroke="#555" stroke-width="1.100"/></svg>
<div class="t" id="t27" style="top:132.5px;height:24px;line-height:24px;font-size:17.5px;color:#666;font-weight:bold;left:483.5px;transform:scaleX(1.1867);">A</div>
<div style="left:481px;top:152px;width:20px;height:5px;background:#ff0000;"></div>
<svg style="left:510px;top:144.5px;" width="8" height="5" viewBox="0 0 8 5"><path d="M.800 .800L4 4L7.200 .800" fill="none" stroke="#555" stroke-width="1.100"/></svg>
<div style="left:528px;top:134px;width:1px;height:27px;background:#d0d0d0;"></div>
<div class="t" id="t28" style="top:134.5px;height:11px;line-height:11px;font-size:8px;color:#444;left:541px;">ア</div>
<div class="t" id="t29" style="top:143.5px;height:15px;line-height:15px;font-size:11px;color:#444;left:541px;">亜</div>
<div style="left:541px;top:144.5px;width:11px;height:1.0px;background:#555;"></div>
<svg style="left:566px;top:144.5px;" width="8" height="5" viewBox="0 0 8 5"><path d="M.800 .800L4 4L7.200 .800" fill="none" stroke="#555" stroke-width="1.100"/></svg>
<div class="t" id="t30" style="top:175.5px;height:21px;line-height:21px;font-size:15px;color:#262626;left:386px;"><span style="letter-spacing:-4.50px;position:relative;left:-2.25px">フォント</span></div>
<svg style="left:575px;top:182.5px;" width="10" height="10" viewBox="0 0 10 10"><path d="M1 8.500V.500" stroke="#9a9a9a" stroke-width="1.200" fill="none"/><path d="M.500 .500H8.500" stroke="#333" stroke-width="1.100" fill="none"/><path d="M3 2.500L8 7.500" stroke="#333" stroke-width="1" fill="none"/><path d="M4.500 8H9" stroke="#333" stroke-width="1.100"/><path d="M8.800 3.500V8.500" stroke="#8a8a8a" stroke-width="1.100"/></svg>
<svg style="left:605px;top:99px;" width="18" height="9" viewBox="0 0 18 9"><rect x="0" y="0" width="18" height="1" fill="#6a6a6a"/><rect x="0" y="3" width="18" height="1" fill="#6a6a6a"/><rect x="0" y="6" width="18" height="1" fill="#6a6a6a"/></svg>
<div style="left:630px;top:94px;width:29px;height:29px;background:#c8c8c8;border:1px solid #a6a6a6"></div>
<svg style="left:636px;top:104px;" width="18" height="12" viewBox="0 0 18 12"><rect x="0" y="0" width="18" height="1" fill="#6a6a6a"/><rect x="0" y="3" width="18" height="1" fill="#6a6a6a"/><rect x="0" y="6" width="18" height="1" fill="#6a6a6a"/><rect x="0" y="9" width="18" height="1" fill="#6a6a6a"/></svg>
<svg style="left:665px;top:107px;" width="18" height="12" viewBox="0 0 18 12"><rect x="0" y="0" width="18" height="1" fill="#6a6a6a"/><rect x="0" y="3" width="18" height="1" fill="#6a6a6a"/><rect x="0" y="6" width="18" height="1" fill="#6a6a6a"/><rect x="0" y="9" width="18" height="1" fill="#6a6a6a"/></svg>
<div style="left:692px;top:95px;width:1px;height:27px;background:#d0d0d0;"></div>
<svg style="left:699px;top:96px;" width="24" height="22" viewBox="0 0 24 22"><text transform="translate(8.300 10.300) rotate(-45)" text-anchor="middle" y="4.600" font-size="14" font-family="Liberation Sans,sans-serif" fill="#555">ab</text><path d="M10.100 19.600L20.600 9.400M17 9.200H20.800V13" fill="none" stroke="#555" stroke-width="1.400"/></svg>
<svg style="left:727px;top:105.5px;" width="8" height="5" viewBox="0 0 8 5"><path d="M.800 .800L4 4L7.200 .800" fill="none" stroke="#555" stroke-width="1.100"/></svg>
<div style="left:760px;top:93px;width:1px;height:69px;background:#d0d0d0;"></div>
<svg style="left:607px;top:142px;" width="15" height="13.2" viewBox="0 0 15 13.2"><rect x="0" y="0.0" width="15" height="1" fill="#6a6a6a"/><rect x="0" y="3.3" width="11" height="1" fill="#6a6a6a"/><rect x="0" y="6.6" width="15" height="1" fill="#6a6a6a"/><rect x="0" y="9.899999999999999" width="11" height="1" fill="#6a6a6a"/></svg>
<svg style="left:636px;top:142px;" width="16" height="13.2" viewBox="0 0 16 13.2"><rect x="0.0" y="0.0" width="16" height="1" fill="#6a6a6a"/><rect x="3.0" y="3.3" width="10" height="1" fill="#6a6a6a"/><rect x="0.0" y="6.6" width="16" height="1" fill="#6a6a6a"/><rect x="3.0" y="9.899999999999999" width="10" height="1" fill="#6a6a6a"/></svg>
<svg style="left:667px;top:142px;" width="15" height="13.2" viewBox="0 0 15 13.2"><rect x="0" y="0.0" width="15" height="1" fill="#6a6a6a"/><rect x="4" y="3.3" width="11" height="1" fill="#6a6a6a"/><rect x="0" y="6.6" width="15" height="1" fill="#6a6a6a"/><rect x="4" y="9.899999999999999" width="11" height="1" fill="#6a6a6a"/></svg>
<div style="left:692px;top:134px;width:1px;height:27px;background:#d0d0d0;"></div>
<svg style="left:702px;top:139px;" width="18" height="16" viewBox="0 0 18 16"><path d="M0 .500H18M9 4H18M9 7.500H18M9 11H18M0 14.500H18" stroke="#6a6a6a" stroke-width="1"/><path d="M7.500 7.500H1M4 4.500L1 7.500L4 10.500" fill="none" stroke="#3c78c0" stroke-width="1.800"/></svg>
<svg style="left:732px;top:139px;" width="18" height="16" viewBox="0 0 18 16"><path d="M0 .500H18M9 4H18M9 7.500H18M9 11H18M0 14.500H18" stroke="#6a6a6a" stroke-width="1"/><path d="M.500 7.500H7M4 4.500L7 7.500L4 10.500" fill="none" stroke="#3c78c0" stroke-width="1.800"/></svg>
<div class="t" id="t31" style="top:96.5px;height:15px;line-height:15px;font-size:11px;color:#555;left:772px;transform:scaleX(1.1429);">ab</div>
<div class="t" id="t32" style="top:105.5px;height:15px;line-height:15px;font-size:11px;color:#555;left:772px;transform:scaleX(1.0909);">c</div>
<svg style="left:779px;top:108px;" width="10" height="9" viewBox="0 0 10 9"><path d="M9 0V4.500H1.500M4 2L1.500 4.500L4 7" fill="none" stroke="#3c78c0" stroke-width="1.300"/></svg>
<div class="t" id="t33" style="top:99.0px;height:21px;line-height:21px;font-size:15px;color:#262626;left:794px;">折<span style="letter-spacing:-3.95px;position:relative;left:-1.97px">り</span>返<span style="letter-spacing:-3.95px;position:relative;left:-1.97px">して</span>全体<span style="letter-spacing:-3.95px;position:relative;left:-1.97px">を</span>表示<span style="letter-spacing:-3.95px;position:relative;left:-1.97px">する</span></div>
<svg style="left:770px;top:137px;" width="20" height="19" viewBox="0 0 20 19"><g fill="#fff" stroke="#6a6a6a" stroke-width="1"><rect x=".500" y=".500" width="19" height="18"/></g><path d="M.500 4.500H19.500M.500 14H19.500M7 .500V4.500M13.500 .500V4.500M7 14V18.500M13.500 14V18.500" stroke="#6a6a6a" stroke-width="1"/><path d="M3 9.300H17M5.500 7L3 9.300L5.500 11.600M14.500 7L17 9.300L14.500 11.600" fill="none" stroke="#3c78c0" stroke-width="1.300"/></svg>
<div class="t" id="t34" style="top:137.5px;height:21px;line-height:21px;font-size:15px;color:#262626;left:794px;"><span style="letter-spacing:-3.44px;position:relative;left:-1.72px">セルを</span>結合<span style="letter-spacing:-3.44px;position:relative;left:-1.72px">して</span>中央揃<span style="letter-spacing:-3.44px;position:relative;left:-1.72px">え</span></div>
<svg style="left:953px;top:144.5px;" width="8" height="5" viewBox="0 0 8 5"><path d="M.800 .800L4 4L7.200 .800" fill="none" stroke="#555" stroke-width="1.100"/></svg>
<div class="t" id="t35" style="top:175.5px;height:21px;line-height:21px;font-size:15px;color:#262626;left:759px;transform:scaleX(0.9662);">配置</div>
<svg style="left:963px;top:182.5px;" width="10" height="10" viewBox="0 0 10 10"><path d="M1 8.500V.500" stroke="#9a9a9a" stroke-width="1.200" fill="none"/><path d="M.500 .500H8.500" stroke="#333" stroke-width="1.100" fill="none"/><path d="M3 2.500L8 7.500" stroke="#333" stroke-width="1" fill="none"/><path d="M4.500 8H9" stroke="#333" stroke-width="1.100"/><path d="M8.800 3.500V8.500" stroke="#8a8a8a" stroke-width="1.100"/></svg>
<div style="left:988px;top:94px;width:174px;height:29px;background:#fff;border:1px solid #ababab"></div>
<div class="t" id="t36" style="top:98.5px;height:21px;line-height:21px;font-size:15px;color:#1a1a1a;left:991px;transform:scaleX(0.9662);">標準</div>
<svg style="left:1149px;top:107px;" width="8" height="5" viewBox="0 0 8 5"><path d="M0 0H8L4 4.500Z" fill="#555"/></svg>
<svg style="left:991px;top:137px;" width="21" height="21" viewBox="0 0 21 21"><rect x=".800" y=".800" width="17" height="10.500" fill="#fff" stroke="#3c78c0" stroke-width="1.600"/><rect x="2" y="2" width="15" height="8" fill="#3c78c0"/><ellipse cx="9.500" cy="6" rx="3" ry="2.600" fill="#fff"/>
<g fill="#f7d9a6" stroke="#d9a441" stroke-width=".800"><ellipse cx="13" cy="18.500" rx="5.500" ry="1.800"/><ellipse cx="13" cy="16" rx="5.500" ry="1.800"/><ellipse cx="13" cy="13.500" rx="5.500" ry="1.800"/><ellipse cx="13" cy="11" rx="5.500" ry="1.800"/></g></svg>
<svg style="left:1021px;top:144.5px;" width="8" height="5" viewBox="0 0 8 5"><path d="M.800 .800L4 4L7.200 .800" fill="none" stroke="#555" stroke-width="1.100"/></svg>
<div class="t" id="t37" style="top:133.5px;height:27px;line-height:27px;font-size:19px;color:#555;left:1043px;transform:scaleX(0.9464);">%</div>
<div class="t" id="t38" style="top:134.0px;height:36px;line-height:36px;font-size:26px;color:#444;font-weight:bold;left:1076px;transform:scaleX(0.9676);">’</div>
<div style="left:1099px;top:134px;width:1px;height:27px;background:#d0d0d0;"></div>
<svg style="left:1110px;top:139px;" width="16" height="18" viewBox="0 0 16 18"><text x="7" y="7.500" font-size="8.500" font-family="Liberation Sans,sans-serif" fill="#555">.0</text><text x="2.500" y="17" font-size="8.500" font-family="Liberation Sans,sans-serif" fill="#555">.00</text><path d="M6.500 4.500H1M3.500 2L1 4.500L3.500 7" fill="none" stroke="#3c78c0" stroke-width="1.400"/></svg>
<svg style="left:1140px;top:139px;" width="16" height="18" viewBox="0 0 16 18"><text x="3" y="7.500" font-size="8.500" font-family="Liberation Sans,sans-serif" fill="#555">.00</text><text x="8" y="17" font-size="8.500" font-family="Liberation Sans,sans-serif" fill="#555">.0</text><path d="M.500 14H6.500M4 11.500L6.500 14L4 16.500" fill="none" stroke="#3c78c0" stroke-width="1.400"/></svg>
<div class="t" id="t39" style="top:175.5px;height:21px;line-height:21px;font-size:15px;color:#262626;left:1049.5px;transform:scaleX(0.9828);">数値</div>
<svg style="left:1157px;top:182.5px;" width="10" height="10" viewBox="0 0 10 10"><path d="M1 8.500V.500" stroke="#9a9a9a" stroke-width="1.200" fill="none"/><path d="M.500 .500H8.500" stroke="#333" stroke-width="1.100" fill="none"/><path d="M3 2.500L8 7.500" stroke="#333" stroke-width="1" fill="none"/><path d="M4.500 8H9" stroke="#333" stroke-width="1.100"/><path d="M8.800 3.500V8.500" stroke="#8a8a8a" stroke-width="1.100"/></svg>
<svg style="left:1195px;top:94px;" width="38" height="35" viewBox="0 0 38 35"><rect x=".500" y=".500" width="33" height="26" fill="#fff" stroke="#8a8a8a"/><path d="M.500 7H33.500M.500 13.500H33.500M.500 20H33.500M10.500 .500V26.500M23 .500V26.500" stroke="#b5b5b5" stroke-width="1"/>
<rect x="11" y="1" width="7" height="6" fill="#dd5b3f"/><rect x="11" y="7.500" width="11" height="6" fill="#4a7ebb"/><rect x="11" y="14" width="7" height="6" fill="#dd5b3f"/><rect x="11" y="20.500" width="5" height="6" fill="#4a7ebb"/>
<rect x="18.500" y="19.500" width="18" height="14" fill="#fff" stroke="#555"/><path d="M23 24.500H32M23 28.500H32M30 21.500L25 31.500" stroke="#333" stroke-width="1.100"/></svg>
<div class="t" id="t40" style="top:130.5px;height:21px;line-height:21px;font-size:15px;color:#262626;left:1184px;">条件付<span style="letter-spacing:-4.03px;position:relative;left:-2.02px">き</span></div>
<div class="t" id="t41" style="top:149.0px;height:21px;line-height:21px;font-size:15px;color:#262626;left:1190.5px;transform:scaleX(0.9495);">書式</div>
<svg style="left:1226px;top:157.5px;" width="8" height="5" viewBox="0 0 8 5"><path d="M.800 .800L4 4L7.200 .800" fill="none" stroke="#555" stroke-width="1.100"/></svg>
<svg style="left:1266px;top:93px;" width="39" height="36" viewBox="0 0 39 36"><rect x=".500" y=".500" width="32" height="27" fill="#fff" stroke="#8a8a8a"/><rect x="8.500" y="7.500" width="24" height="20" fill="#bdd3ee"/><path d="M.500 7.500H32.500M.500 14H32.500M.500 20.500H32.500M8.500 .500V27.500M16.500 .500V27.500M24.500 .500V27.500" stroke="#a0a0a0" stroke-width="1"/>
<path d="M25 23L34 11L38 8V13L29 26Z" fill="#7a7a7a"/><path d="M11 34C14 33 15 29 18.500 26C21 24 25 25 25.500 28C26 31 22 33 18 33.500C15 34 13 34 11 34Z" fill="#3c78c0"/><ellipse cx="22" cy="28.500" rx="2.600" ry="1.600" fill="#fff" transform="rotate(-35 22 28.500)"/></svg>
<div class="t" id="t42" style="top:130.5px;height:21px;line-height:21px;font-size:15px;color:#262626;left:1245px;"><span style="letter-spacing:-3.81px;position:relative;left:-1.90px">テーブルとして</span></div>
<div class="t" id="t43" style="top:149.0px;height:21px;line-height:21px;font-size:15px;color:#262626;left:1248px;transform:scaleX(0.9664);">書式設定</div>
<svg style="left:1313px;top:157.5px;" width="8" height="5" viewBox="0 0 8 5"><path d="M.800 .800L4 4L7.200 .800" fill="none" stroke="#555" stroke-width="1.100"/></svg>
<svg style="left:1340px;top:90px;" width="39" height="39" viewBox="0 0 39 39"><rect x=".500" y=".500" width="33" height="28" fill="#fff" stroke="#8a8a8a"/><path d="M.500 7H33.500M.500 22H33.500M7 .500V28.500M26 .500V28.500" stroke="#b5b5b5" stroke-width="1"/><rect x="7.500" y="7.500" width="18" height="14" fill="#bdd3ee"/>
<path d="M25 26L34 14L38 11V16L29 29Z" fill="#7a7a7a"/><path d="M11 37C14 36 15 32 18.500 29C21 27 25 28 25.500 31C26 34 22 36 18 36.500C15 37 13 37 11 37Z" fill="#3c78c0"/><ellipse cx="22" cy="31.500" rx="2.600" ry="1.600" fill="#fff" transform="rotate(-35 22 31.500)"/></svg>
<div class="t" id="t44" style="top:130.5px;height:21px;line-height:21px;font-size:15px;color:#262626;left:1341px;"><span style="letter-spacing:-3.51px;position:relative;left:-1.75px">セルの</span></div>
<div class="t" id="t45" style="top:149.0px;height:21px;line-height:21px;font-size:15px;color:#262626;left:1328px;"><span style="letter-spacing:-4.25px;position:relative;left:-2.13px">スタイル</span></div>
<svg style="left:1378px;top:157.5px;" width="8" height="5" viewBox="0 0 8 5"><path d="M.800 .800L4 4L7.200 .800" fill="none" stroke="#555" stroke-width="1.100"/></svg>
<div class="t" id="t46" style="top:175.5px;height:21px;line-height:21px;font-size:15px;color:#262626;left:1263.5px;"><span style="letter-spacing:-4.25px;position:relative;left:-2.13px">スタイル</span></div>
<svg style="left:1417px;top:91px;" width="37" height="35" viewBox="0 0 37 35"><g fill="#fff" stroke="#8a8a8a"><rect x="3.500" y=".500" width="18" height="6"/><rect x="3.500" y="22.500" width="18" height="12"/></g><path d="M12.500 .500V6.500M12.500 22.500V34.500M3.500 28.500H21.500" stroke="#8a8a8a"/>
<rect x="18.500" y="11.500" width="18" height="6" fill="#bdd3ee" stroke="#8a8a8a"/><path d="M27.500 11.500V17.500" stroke="#8a8a8a"/><path d="M15 14.500H2M7 9L1.500 14.500L7 20" fill="none" stroke="#3c78c0" stroke-width="2.300"/></svg>
<div class="t" id="t47" style="top:129.5px;height:21px;line-height:21px;font-size:15px;color:#262626;left:1421px;transform:scaleX(0.9662);">挿入</div>
<svg style="left:1433.5px;top:157.5px;" width="8" height="5" viewBox="0 0 8 5"><path d="M.800 .800L4 4L7.200 .800" fill="none" stroke="#555" stroke-width="1.100"/></svg>
<svg style="left:1472px;top:91px;" width="37" height="35" viewBox="0 0 37 35"><g fill="#fff" stroke="#8a8a8a"><rect x=".500" y=".500" width="18" height="6"/><rect x=".500" y="22.500" width="18" height="12"/></g><path d="M9.500 .500V6.500M9.500 22.500V34.500M.500 28.500H18.500" stroke="#8a8a8a"/>
<rect x="8.500" y="11.500" width="14" height="6" fill="#bdd3ee" stroke="#8a8a8a"/><path d="M15.500 11.500V17.500" stroke="#8a8a8a"/><path d="M20 7.500L34 21.500M34 7.500L20 21.500" stroke="#dd5b3f" stroke-width="2"/></svg>
<div class="t" id="t48" style="top:129.5px;height:21px;line-height:21px;font-size:15px;color:#262626;left:1473px;transform:scaleX(0.9828);">削除</div>
<svg style="left:1486px;top:157.5px;" width="8" height="5" viewBox="0 0 8 5"><path d="M.800 .800L4 4L7.200 .800" fill="none" stroke="#555" stroke-width="1.100"/></svg>
<svg style="left:1523px;top:89px;" width="35" height="39" viewBox="0 0 35 39"><path d="M.500 1V6M33.500 1V6M2 3.500H32M5 1L2 3.500L5 6M29 1L32 3.500L29 6" fill="none" stroke="#3c78c0" stroke-width="1.200"/>
<rect x=".500" y="9.500" width="33" height="24" fill="#fff" stroke="#8a8a8a"/><path d="M.500 15.500H33.500M.500 27.500H33.500M8.500 9.500V33.500M18.500 9.500V33.500M26 9.500V33.500" stroke="#b5b5b5"/><rect x="9" y="16" width="9" height="11" fill="#4a7ebb"/>
<path d="M.500 33.500V36.500H9L11 34.500L13 36.500H20L22 34.500" fill="none" stroke="#8a8a8a"/></svg>
<div class="t" id="t49" style="top:129.5px;height:21px;line-height:21px;font-size:15px;color:#262626;left:1525px;transform:scaleX(0.9828);">書式</div>
<svg style="left:1538px;top:157.5px;" width="8" height="5" viewBox="0 0 8 5"><path d="M.800 .800L4 4L7.200 .800" fill="none" stroke="#555" stroke-width="1.100"/></svg>
<div class="t" id="t50" style="top:175.5px;height:21px;line-height:21px;font-size:15px;color:#262626;left:1475px;"><span style="letter-spacing:-3.01px;position:relative;left:-1.50px">セル</span></div>
<div class="t" id="t51" style="top:82.5px;height:31px;line-height:31px;font-size:22px;color:#444;left:1591px;transform:scaleX(1.1757);">Σ</div>
<div class="t" id="t52" style="top:89.0px;height:21px;line-height:21px;font-size:15px;color:#262626;left:1614px;"><span style="letter-spacing:-3.51px;position:relative;left:-1.75px">オート</span> SUM</div>
<svg style="left:1700px;top:95.5px;" width="8" height="5" viewBox="0 0 8 5"><path d="M.800 .800L4 4L7.200 .800" fill="none" stroke="#555" stroke-width="1.100"/></svg>
<svg style="left:1591px;top:118px;" width="18" height="19" viewBox="0 0 18 19"><rect x=".500" y=".500" width="17" height="18" fill="#fff" stroke="#8a8a8a"/><rect x=".500" y=".500" width="17" height="3" fill="#8a8a8a"/><path d="M9 6V15M5 11.500L9 15.500L13 11.500" fill="none" stroke="#3c78c0" stroke-width="2"/></svg>
<div class="t" id="t53" style="top:118.5px;height:21px;line-height:21px;font-size:15px;color:#262626;left:1614px;transform:scaleX(0.9454);"><span style="letter-spacing:-4.50px;position:relative;left:-2.25px">フィル</span></div>
<svg style="left:1650px;top:125.5px;" width="8" height="5" viewBox="0 0 8 5"><path d="M.800 .800L4 4L7.200 .800" fill="none" stroke="#555" stroke-width="1.100"/></svg>
<svg style="left:1591px;top:148px;" width="18" height="16" viewBox="0 0 18 16"><path d="M1 11L10.500 1L17 6.500L8 15.500H4.500Z" fill="#ee8a9e"/><path d="M1 11L4.500 7.500L10.500 13L8 15.500H4.500Z" fill="#f8c4cd"/></svg>
<div class="t" id="t54" style="top:147.0px;height:21px;line-height:21px;font-size:15px;color:#262626;left:1614px;transform:scaleX(0.9519);"><span style="letter-spacing:-4.50px;position:relative;left:-2.25px">クリア</span></div>
<svg style="left:1650px;top:154.5px;" width="8" height="5" viewBox="0 0 8 5"><path d="M.800 .800L4 4L7.200 .800" fill="none" stroke="#555" stroke-width="1.100"/></svg>
<div class="t" id="t55" style="top:86.5px;height:27px;line-height:27px;font-size:19.5px;color:#3c78c0;left:1733px;transform:scaleX(1.0372);">A</div>
<div class="t" id="t56" style="top:103.5px;height:27px;line-height:27px;font-size:19px;color:#a855c8;left:1733.5px;transform:scaleX(1.0767);">Z</div>
<svg style="left:1750px;top:98px;" width="19" height="19" viewBox="0 0 19 19"><path d="M.500 1H18.500L11.500 9V17.500L7.500 15V9Z" fill="#7a7a7a"/></svg>
<div class="t" id="t57" style="top:130.5px;height:21px;line-height:21px;font-size:15px;color:#262626;left:1719px;">並<span style="letter-spacing:-4.02px;position:relative;left:-2.01px">べ</span>替<span style="letter-spacing:-4.02px;position:relative;left:-2.01px">えと</span></div>
<div class="t" id="t58" style="top:149.0px;height:21px;line-height:21px;font-size:15px;color:#262626;left:1716.5px;"><span style="letter-spacing:-4.50px;position:relative;left:-2.25px">フィルター</span></div>
<svg style="left:1775px;top:157.5px;" width="8" height="5" viewBox="0 0 8 5"><path d="M.800 .800L4 4L7.200 .800" fill="none" stroke="#555" stroke-width="1.100"/></svg>
<svg style="left:1795px;top:90px;" width="36" height="37" viewBox="0 0 36 37"><circle cx="23" cy="12.500" r="10.300" fill="#fff" stroke="#4a86c8" stroke-width="2.600"/><path d="M15.500 20.500L2.500 34" stroke="#4a86c8" stroke-width="4" stroke-linecap="round"/></svg>
<div class="t" id="t59" style="top:130.5px;height:21px;line-height:21px;font-size:15px;color:#262626;left:1793px;transform:scaleX(0.9499);">検索<span style="letter-spacing:-4.50px;position:relative;left:-2.25px">と</span></div>
<div class="t" id="t60" style="top:149.0px;height:21px;line-height:21px;font-size:15px;color:#262626;left:1790px;">選択</div>
<svg style="left:1826px;top:157.5px;" width="8" height="5" viewBox="0 0 8 5"><path d="M.800 .800L4 4L7.200 .800" fill="none" stroke="#555" stroke-width="1.100"/></svg>
<div class="t" id="t61" style="top:175.5px;height:21px;line-height:21px;font-size:15px;color:#262626;left:1696px;">編集</div>
<svg style="left:1896px;top:186px;" width="14" height="8" viewBox="0 0 14 8"><path d="M1 7L7 1L13 7" fill="none" stroke="#555" stroke-width="1.300"/></svg>
<div style="left:0px;top:198px;width:1920px;height:60px;background:#e6e6e6;"></div>
<div style="left:6px;top:210px;width:127px;height:36px;background:#fff;border:1px solid #d0d0d0"></div>
<div class="t" id="t62" style="top:217.0px;height:26px;line-height:26px;font-size:18.33px;color:#444;left:14px;transform:scaleX(0.8882);">T3</div>
<svg style="left:117px;top:226px;" width="8" height="5" viewBox="0 0 8 5"><path d="M0 0H8L4 4.500Z" fill="#777"/></svg>
<div style="left:150px;top:222px;width:3px;height:2px;background:#b5b5b5;"></div>
<div style="left:150px;top:226px;width:3px;height:2px;background:#b5b5b5;"></div>
<div style="left:150px;top:230px;width:3px;height:2px;background:#b5b5b5;"></div>
<div style="left:150px;top:234px;width:3px;height:2px;background:#b5b5b5;"></div>
<div style="left:170px;top:210px;width:137px;height:36px;background:#fff;border:1px solid #d0d0d0"></div>
<svg style="left:185px;top:221px;" width="14" height="14" viewBox="0 0 14 14"><path d="M1 1L13 13M13 1L1 13" stroke="#c2c2c2" stroke-width="1.800"/></svg>
<svg style="left:229px;top:221px;" width="18" height="14" viewBox="0 0 18 14"><path d="M1.500 8L6.500 12.500L16.500 1.500" fill="none" stroke="#c2c2c2" stroke-width="2.400"/></svg>
<div class="t" id="t63" style="top:214.0px;height:28px;line-height:28px;font-size:20px;color:#555;font-weight:bold;font-family:'Liberation Serif',serif;left:274px;"><i>f</i><i style='font-size:15px'>x</i></div>
<div style="left:310px;top:210px;width:1604px;height:36px;background:#fff;border:1px solid #d0d0d0"></div>
<div class="t" id="t64" style="top:215.0px;height:26px;line-height:26px;font-size:18.33px;color:#444;left:325px;transform:scaleX(0.9812);">47.6</div>
<svg style="left:1897px;top:223px;" width="13" height="9" viewBox="0 0 13 9"><path d="M1.500 1.500L6.500 6.500L11.500 1.500" fill="none" stroke="#666" stroke-width="2.600"/></svg>
<div style="left:1898px;top:260px;width:19px;height:19px;background:#fff;border:1px solid #ababab"></div>
<svg style="left:1903px;top:266px;" width="9" height="6" viewBox="0 0 9 6"><path d="M0 5.500H9L4.500 .500Z" fill="#777"/></svg>
<div style="left:1898px;top:280px;width:19px;height:41px;background:#fff;border:1px solid #c2c2c2"></div>
<div style="left:1898px;top:321px;width:19px;height:636px;background:#dadada;"></div>
<div style="left:1898px;top:957px;width:19px;height:19px;background:#fff;border:1px solid #ababab"></div>
<svg style="left:1903px;top:964px;" width="9" height="6" viewBox="0 0 9 6"><path d="M0 .500H9L4.500 5.500Z" fill="#777"/></svg>
<div style="left:0px;top:976px;width:1920px;height:28px;background:#e6e6e6;"></div>
<div style="left:0px;top:975px;width:1895px;height:1px;background:#9e9e9e;"></div>
<div style="left:0px;top:1003px;width:1920px;height:1px;background:#c6c6c6;"></div>
<svg style="left:27px;top:984px;" width="7" height="11" viewBox="0 0 7 11"><path d="M6.500 0V11L.500 5.500Z" fill="#217346"/></svg>
<svg style="left:54px;top:984px;" width="7" height="11" viewBox="0 0 7 11"><path d="M.500 0V11L6.500 5.500Z" fill="#217346"/></svg>
<div class="t" id="t65" style="top:975.0px;height:24px;line-height:24px;font-size:17px;color:#217346;left:79px;transform:scaleX(0.9879);">...</div>
<div style="left:100px;top:979px;width:1px;height:20px;background:#ababab;"></div>
<div class="t" id="t66" style="top:974.5px;height:25px;line-height:25px;font-size:18px;color:#595959;left:114px;transform:scaleX(0.9781);">業種別張<span style="letter-spacing:-5.40px;position:relative;left:-2.70px">り</span>付<span style="letter-spacing:-5.40px;position:relative;left:-2.70px">けば</span></div>
<div style="left:253px;top:979px;width:1px;height:20px;background:#ababab;"></div>
<div style="left:256px;top:976px;width:104px;height:24px;background:#ed7d31;"></div>
<div class="t" id="t67" style="top:974.5px;height:25px;line-height:25px;font-size:18px;color:#1a1a1a;left:265px;transform:scaleX(0.9444);">業種別株価</div>
<div style="left:362px;top:979px;width:1px;height:20px;background:#ababab;"></div>
<div style="left:365px;top:976px;width:63px;height:24px;background:#ed7d31;"></div>
<div class="t" id="t68" style="top:974.5px;height:25px;line-height:25px;font-size:18px;color:#1a1a1a;left:374px;transform:scaleX(0.9259);">業種別</div>
<div style="left:434px;top:979px;width:1px;height:20px;background:#ababab;"></div>
<div style="left:440px;top:976px;width:94px;height:24px;background:#ed7d31;"></div>
<div class="t" id="t69" style="top:974.5px;height:25px;line-height:25px;font-size:18px;color:#1a1a1a;left:450px;transform:scaleX(0.9861);">20日騰落</div>
<div style="left:536px;top:979px;width:1px;height:20px;background:#ababab;"></div>
<div style="left:539px;top:976px;width:175px;height:24px;background:#ed7d31;"></div>
<div class="t" id="t70" style="top:974.5px;height:25px;line-height:25px;font-size:18px;color:#1a1a1a;left:551px;transform:scaleX(0.9565);">日別<span style="letter-spacing:-5.40px;position:relative;left:-2.70px">と</span>株価<span style="letter-spacing:-5.40px;position:relative;left:-2.70px">による</span>診断</div>
<div style="left:716px;top:979px;width:1px;height:20px;background:#ababab;"></div>
<div style="left:719px;top:976px;width:107px;height:24px;background:#ed7d31;"></div>
<div class="t" id="t71" style="top:974.5px;height:25px;line-height:25px;font-size:18px;color:#1a1a1a;left:729px;">累計&nbsp; <span style="letter-spacing:-4.67px;position:relative;left:-2.34px">データ</span></div>
<div style="left:829px;top:979px;width:1px;height:20px;background:#ababab;"></div>
<div class="t" id="t72" style="top:974.5px;height:25px;line-height:25px;font-size:18px;color:#595959;left:842px;transform:scaleX(0.9559);"><span style="letter-spacing:-5.40px;position:relative;left:-2.70px">トレンド</span>統計関連</div>
<div style="left:972px;top:976px;width:94px;height:24px;background:linear-gradient(#fff 0%,#fde9e9 35%,#f77 100%);border-left:1px solid #ababab;border-right:1px solid #ababab"></div>
<div style="left:972px;top:998px;width:95px;height:2px;background:#217346;"></div>
<div class="t" id="t73" style="top:974.5px;height:25px;line-height:25px;font-size:18px;color:#217346;left:985px;">日経225</div>
<div style="left:1069px;top:978px;width:11px;height:22px;background:#ff0000;"></div>
<div class="t" id="t74" style="top:975.0px;height:24px;line-height:24px;font-size:17px;color:#217346;left:1088px;transform:scaleX(0.9173);">...</div>
<svg style="left:1111px;top:979px;" width="22" height="22" viewBox="0 0 22 22"><circle cx="11" cy="11" r="9.700" fill="none" stroke="#8a8a8a" stroke-width="1.300"/><path d="M11 6V16M6 11H16" stroke="#6a6a6a" stroke-width="1.500"/></svg>
<div style="left:1148px;top:983px;width:3px;height:2px;background:#b5b5b5;"></div>
<div style="left:1148px;top:987px;width:3px;height:2px;background:#b5b5b5;"></div>
<div style="left:1148px;top:991px;width:3px;height:2px;background:#b5b5b5;"></div>
<div style="left:1148px;top:995px;width:3px;height:2px;background:#b5b5b5;"></div>
<div style="left:1166px;top:980px;width:19px;height:19px;background:#fff;border:1px solid #ababab"></div>
<svg style="left:1172px;top:985px;" width="6" height="9" viewBox="0 0 6 9"><path d="M5.500 0V9L.500 4.500Z" fill="#777"/></svg>
<div style="left:1185px;top:980px;width:658px;height:19px;background:#fff;border:1px solid #c2c2c2"></div>
<div style="left:1843px;top:981px;width:33px;height:17px;background:#dcdcdc;"></div>
<div style="left:1876px;top:980px;width:19px;height:19px;background:#fff;border:1px solid #ababab"></div>
<svg style="left:1883px;top:985px;" width="6" height="9" viewBox="0 0 6 9"><path d="M.500 0V9L5.500 4.500Z" fill="#777"/></svg>
<div style="left:0px;top:1004px;width:1920px;height:26px;background:#f3f3f3;"></div>
<div class="t" id="t75" style="top:1006.5px;height:21px;line-height:21px;font-size:15px;color:#333;left:9px;">準備完了</div>
<div style="left:1088px;top:1004px;width:156px;height:26px;background:#d2d2d2;"></div>
<div class="t" id="t76" style="top:1006.5px;height:21px;line-height:21px;font-size:15px;color:#333;left:1098px;transform:scaleX(1.0640);">平均: 9563.519014</div>
<div class="t" id="t77" style="top:1006.5px;height:21px;line-height:21px;font-size:15px;color:#333;left:1253px;"><span style="letter-spacing:-2.76px;position:relative;left:-1.38px">データの</span>個数: 24</div>
<div class="t" id="t78" style="top:1006.5px;height:21px;line-height:21px;font-size:15px;color:#333;left:1378px;transform:scaleX(1.0799);">合計: 172143.3423</div>
<div style="left:1538px;top:1004px;width:50px;height:26px;background:#c6c6c6;"></div>
<svg style="left:1555px;top:1009px;" width="17" height="16" viewBox="0 0 17 16"><g fill="none" stroke="#666" stroke-width="1.100"><rect x=".600" y=".600" width="15.800" height="14.800"/><path d="M.600 5.500H16.400M.600 10.500H16.400M6 .600V15.400M11 .600V15.400"/></g></svg>
<svg style="left:1604px;top:1009px;" width="17" height="16" viewBox="0 0 17 16"><g fill="none" stroke="#666" stroke-width="1.100"><rect x=".600" y=".600" width="15.800" height="14.800"/><rect x="4" y="3.500" width="9" height="9"/><path d="M6 6.500H11M6 9.500H11"/></g></svg>
<svg style="left:1654px;top:1009px;" width="17" height="16" viewBox="0 0 17 16"><g fill="none" stroke="#666" stroke-width="1.100"><rect x=".600" y=".600" width="15.800" height="14.800"/><path d="M5.500 .600V8.500H.600M11 .600V8.500H5.500"/></g></svg>
<div style="left:1695px;top:1016px;width:10px;height:1px;background:#555;"></div>
<div style="left:1711px;top:1016px;width:125px;height:1px;background:#ababab;"></div>
<div style="left:1771px;top:1010px;width:6px;height:14px;background:#666;"></div>
<div style="left:1842px;top:1016px;width:10px;height:1px;background:#555;"></div>
<div style="left:1846px;top:1012px;width:1px;height:10px;background:#555;"></div>
<div class="t" id="t79" style="top:1006.5px;height:21px;line-height:21px;font-size:15px;color:#333;left:1869px;transform:scaleX(1.0423);">100%</div>
<div style="left:0px;top:1030px;width:1920px;height:50px;background:linear-gradient(90deg,#f3e7d6 0%,#f2e3d4 42%,#eedbd0 75%,#ecd7cc 100%);"></div>
<div style="left:60px;top:1031px;width:430px;height:49px;background:#fff;border:1px solid #d8d0c8;border-bottom:none"></div>
<svg style="left:20px;top:1045px;" width="20" height="20" viewBox="0 0 20 20"><path d="M0 2.800L8.200 1.700V9.500H0ZM9.200 1.500L20 0V9.500H9.200ZM0 10.500H8.200V18.300L0 17.200ZM9.200 10.500H20V20L9.200 18.500Z" fill="#000"/></svg>
<svg style="left:74px;top:1043px;" width="22" height="22" viewBox="0 0 22 22"><circle cx="13.500" cy="8.500" r="6.300" fill="none" stroke="#222" stroke-width="1.600"/><path d="M9 13L1.500 20.500" stroke="#222" stroke-width="1.800"/></svg>
<div class="t" id="t80" style="top:1043.0px;height:24px;line-height:24px;font-size:17.5px;color:#333;left:110px;"><span style="letter-spacing:-3.20px;position:relative;left:-1.60px">ここに</span>入力<span style="letter-spacing:-3.20px;position:relative;left:-1.60px">して</span>検索</div>
<svg style="left:508px;top:1043px;" width="24" height="24" viewBox="0 0 24 24"><circle cx="12" cy="12" r="8.800" fill="none" stroke="#111" stroke-width="3"/></svg>
<svg style="left:569px;top:1045px;" width="22" height="20" viewBox="0 0 22 20"><g fill="none" stroke="#111" stroke-width="1.300"><rect x="1" y="5" width="11" height="9.500"/><path d="M1 1V2.500H12V1M1 18.500V17H12V18.500M18 0V5M18 9.500V19"/><rect x="16.800" y="6" width="2.400" height="2.400" fill="#111"/></g></svg>
<svg style="left:630px;top:1042px;" width="28" height="25" viewBox="0 0 28 25"><path d="M.500 2.200A1.200 1.200 0 0 1 1.700 1H9.500L12 3.500V6H.500Z" fill="#e5a50f"/><rect x=".500" y="3.200" width="27" height="19" rx="1.200" fill="#ffcd45"/><path d="M.500 8.500L11 8.500L13 6.500H27.500V21A1.200 1.200 0 0 1 26.300 22.200H1.700A1.200 1.200 0 0 1 .500 21Z" fill="#ffdf80"/>
<path d="M5.500 24V13.700A1.200 1.200 0 0 1 6.700 12.500H21.300A1.200 1.200 0 0 1 22.500 13.700V24H18V18H10V24Z" fill="#3b98e6"/><path d="M5.500 22.200H10V24H5.500ZM18 22.200H22.500V24H18Z" fill="#2a78c8"/></svg>
<div style="left:619px;top:1077px;width:51px;height:3px;background:#0b78d0;"></div>
<svg style="left:691px;top:1039px;" width="30" height="32" viewBox="0 0 30 32"><rect x="7.500" y="2" width="15" height="10" rx="2" fill="none" stroke="#1f1f1f" stroke-width="2.400"/><path d="M.500 9.500H29.500V29.500A1.500 1.500 0 0 1 28 31H2A1.500 1.500 0 0 1 .500 29.500Z" fill="#2e2e2e"/><path d="M.500 9.500H29.500V12H.500Z" fill="#3a3a3a"/>
<rect x="9.300" y="15.300" width="5.200" height="5.200" fill="#f25022"/><rect x="15.500" y="15.300" width="5.200" height="5.200" fill="#7fba00"/><rect x="9.300" y="21.500" width="5.200" height="5.200" fill="#00a4ef"/><rect x="15.500" y="21.500" width="5.200" height="5.200" fill="#ffb900"/></svg>
<svg style="left:752px;top:1040px;" width="32" height="30" viewBox="0 0 32 30"><path d="M1 11.500L16 1L31 11.500V29H1Z" fill="#0f64b4"/><path d="M3.500 11.200H28.500L16 19.500Z" fill="#fff"/><path d="M3.500 11.200H28.500L27 12.800H5Z" fill="#c9d3dc"/><path d="M1 11.500L16 20.500L31 11.500V29H1Z" fill="#28a6e8"/><path d="M31 11.500V29H8L16 20.500Z" fill="#36c0f1"/><path d="M1 29L16 20.500L31 29Z" fill="#1a8ad8" opacity=".550"/></svg>
<svg style="left:815px;top:1040px;" width="30" height="30" viewBox="0 0 30 30"><rect width="30" height="30" fill="#f9552a"/><circle cx="15" cy="15" r="11.800" fill="#fff"/><path d="M7 24.500C8 20.500 11 19 15 19C19 19 22 20.500 23 24.500C20.800 26.200 18 27 15 27C12 27 9.200 26.200 7 24.500Z" fill="#fbb9a6"/><circle cx="15" cy="13.500" r="5.300" fill="#fbc4b3"/><path d="M9.500 13.500A5.500 5.500 0 0 1 20.500 12.500C18 12.500 15 11 13.500 9.500C12.500 11.500 11 13 9.500 13.500Z" fill="#f9552a"/><path d="M12.500 16.500C14 18 16.500 18 18 16.500" fill="none" stroke="#f9552a" stroke-width="1.200"/></svg>
<svg style="left:878px;top:1041px;" width="28" height="27" viewBox="0 0 28 27"><defs><linearGradient id="gm" x1="0" y1="0" x2="0" y2="1"><stop offset="0" stop-color="#3d6cf0"/><stop offset="1" stop-color="#1a2fb8"/></linearGradient></defs><rect x=".500" y=".500" width="27" height="26" rx="4" fill="url(#gm)" stroke="#b9c6f5"/>
<text x="14" y="16" font-size="16" font-family="Liberation Sans,sans-serif" font-weight="bold" fill="#fff" text-anchor="middle">@</text><text x="14" y="23.500" font-size="6.500" font-family="Liberation Sans,sans-serif" fill="#fff" text-anchor="middle">menu</text></svg>
<div style="left:867px;top:1077px;width:51px;height:3px;background:#0b78d0;"></div>
<svg style="left:938px;top:1039px;" width="32" height="32" viewBox="0 0 32 32"><defs><linearGradient id="ge" x1="0" y1="0" x2="1" y2="1"><stop offset="0" stop-color="#35c1f1"/><stop offset=".550" stop-color="#2a9fe0"/><stop offset="1" stop-color="#0f5cb0"/></linearGradient>
<linearGradient id="ge2" x1="0" y1="0" x2="1" y2="0"><stop offset="0" stop-color="#2fc4d6"/><stop offset="1" stop-color="#6fd64a"/></linearGradient></defs>
<circle cx="16" cy="16" r="15" fill="url(#ge)"/><path d="M3 10C7 2 17 -1 25 4C31 8 32 15 30 19C27 23 20 23 18 19C17 16 19 14 20 13C15 8 6 12 3 10Z" fill="url(#ge2)"/>
<path d="M12 13C17 10 22 13 21 17C20 19 18 19 18 19C19 23 25 24 29 21C27 27 21 31 15 30C10 24 9 17 12 13Z" fill="#0d4f9c"/><path d="M12.500 13.500C10 17 10.500 25 16 30.500C8 30 2 24 2 16C4 11 9 10.500 12.500 13.500Z" fill="#1b7fd0" opacity=".550"/>
<path d="M18 19C17 16 19 14 20 13C22 15 21 18 18 19Z" fill="#f1e4d6"/></svg>
<div style="left:929px;top:1077px;width:51px;height:3px;background:#0b78d0;"></div>
<svg style="left:1002px;top:1041px;" width="28" height="28" viewBox="0 0 28 28"><defs><linearGradient id="gp" x1="0" y1="0" x2="0" y2="1"><stop offset="0" stop-color="#35b1f2"/><stop offset="1" stop-color="#2a6cd6"/></linearGradient></defs><rect width="28" height="28" rx="1.500" fill="url(#gp)"/>
<path d="M0 22L10 10.500L19 21L22.500 17L28 23.500V26.500A1.500 1.500 0 0 1 26.500 28H1.500A1.500 1.500 0 0 1 0 26.500Z" fill="#16408f"/><path d="M14 28L22.500 17L28 23.500V26.500A1.500 1.500 0 0 1 26.500 28Z" fill="#3f66c4"/><circle cx="20.500" cy="6.500" r="2.300" fill="#fff"/></svg>
<div style="left:991px;top:1077px;width:42px;height:3px;background:#0b78d0;"></div>
<div style="left:1033px;top:1077px;width:9px;height:3px;background:#7db5e6;"></div>
<div style="left:1048px;top:1030px;width:61px;height:50px;background:#f9f0e9;"></div>
<svg style="left:1062px;top:1041px;" width="31" height="28" viewBox="0 0 31 28"><path d="M8 0H29.500A1.500 1.500 0 0 1 31 1.500V26.500A1.500 1.500 0 0 1 29.500 28H8Z" fill="#185c37"/><rect x="8" y="0" width="11.500" height="7" fill="#21a366"/><path d="M19.500 0H29.500A1.500 1.500 0 0 1 31 1.500V7H19.500Z" fill="#33c481"/><rect x="8" y="7" width="11.500" height="7" fill="#107c41"/><rect x="19.500" y="7" width="11.500" height="7" fill="#21a366"/><rect x="19.500" y="14" width="11.500" height="7" fill="#107c41"/>
<rect x="1" y="5.500" width="15.500" height="15.500" rx="1.500" fill="#107c41"/><path d="M5.500 9.500L12 17.500M12 9.500L5.500 17.500" stroke="#fff" stroke-width="2.100"/></svg>
<div style="left:1048px;top:1077px;width:61px;height:3px;background:#0b78d0;"></div>
<svg style="left:1447px;top:1045px;" width="27" height="22" viewBox="0 0 27 22"><ellipse cx="8" cy="11.500" rx="7" ry="5.500" fill="#d9ecfa"/><ellipse cx="14" cy="7.500" rx="7" ry="6.500" fill="#e6f2fb"/><ellipse cx="20" cy="11.500" rx="6.500" ry="5.500" fill="#cfe4f5"/><rect x="6" y="10" width="15" height="7" fill="#d9ecfa"/><path d="M13 14C13 14 10.300 17.500 10.300 19.300A2.700 2.700 0 0 0 15.700 19.300C15.700 17.500 13 14 13 14Z" fill="#2d8fe3"/></svg>
<div class="t" id="t81" style="top:1042.5px;height:25px;line-height:25px;font-size:18px;color:#222;left:1486px;transform:scaleX(0.9200);">23°C</div>
<div class="t" id="t82" style="top:1043.0px;height:24px;line-height:24px;font-size:17.5px;color:#222;left:1534px;transform:scaleX(0.9714);">小雨</div>
<svg style="left:1591px;top:1049px;" width="17" height="10" viewBox="0 0 17 10"><path d="M1 9L8.500 1.500L16 9" fill="none" stroke="#222" stroke-width="1.400"/></svg>
<svg style="left:1619px;top:1046px;" width="21" height="15" viewBox="0 0 21 15"><path d="M5.500 14A4.500 4.500 0 0 1 4.500 5.200A6 6 0 0 1 15.500 4.500A4.800 4.800 0 0 1 16 14Z" fill="#bdbdbd" stroke="#444" stroke-width="1.200"/><path d="M2 10L11 5L20 10.500" fill="none" stroke="#8a8a8a" stroke-width="1"/></svg>
<svg style="left:1648px;top:1047px;" width="22" height="14" viewBox="0 0 22 14"><rect x="5.500" y="3" width="14" height="9" fill="none" stroke="#111" stroke-width="1.100"/><rect x="7" y="4.500" width="11" height="6" fill="#111"/><rect x="20" y="5.500" width="1.500" height="4" fill="#111"/><path d="M1.500 0V3M3.500 0V3M.500 3H4.500V5.500A2 2 0 0 1 .500 5.500ZM2.500 7.500V10H5" fill="none" stroke="#111" stroke-width="1"/></svg>
<svg style="left:1681px;top:1046px;" width="18" height="18" viewBox="0 0 18 18"><g fill="none" stroke="#333" stroke-width="1.300"><path d="M1.500 17A15 15 0 0 1 16.500 2"/><path d="M6 17A10.500 10.500 0 0 1 16.500 6.500"/><path d="M10.500 17A6 6 0 0 1 16.500 11"/></g><circle cx="15.500" cy="16" r="1.500" fill="#333"/></svg>
<svg style="left:1708px;top:1046px;" width="22" height="18" viewBox="0 0 22 18"><path d="M1 6H4.500L9 1.500V16.500L4.500 12H1Z" fill="none" stroke="#222" stroke-width="1.200"/><path d="M11.500 6A4 4 0 0 1 11.500 12M14 3.500A7.500 7.500 0 0 1 14 14.500" fill="none" stroke="#222" stroke-width="1.100"/><path d="M17 1A11 11 0 0 1 17 17" fill="none" stroke="#999" stroke-width="1"/></svg>
<div class="t" id="t83" style="top:1038.0px;height:36px;line-height:36px;font-size:26px;color:#111;left:1740px;transform:scaleX(0.9225);">A</div>
<div class="t" id="t84" style="top:1033.0px;height:22px;line-height:22px;font-size:15.5px;color:#222;left:1790px;transform:scaleX(0.9021);">21:33</div>
<div class="t" id="t85" style="top:1056.0px;height:22px;line-height:22px;font-size:15.5px;color:#222;left:1770px;transform:scaleX(0.9797);">2021/07/08</div>
<svg style="left:1869px;top:1045px;" width="21" height="21" viewBox="0 0 21 21"><path d="M.700 .700H20.300V15.500H13L10.500 18L8 15.500H.700Z" fill="none" stroke="#222" stroke-width="1.400"/></svg>
<div style="left:1914px;top:1030px;width:1px;height:50px;background:#b8a79c;"></div>
</body></html>
